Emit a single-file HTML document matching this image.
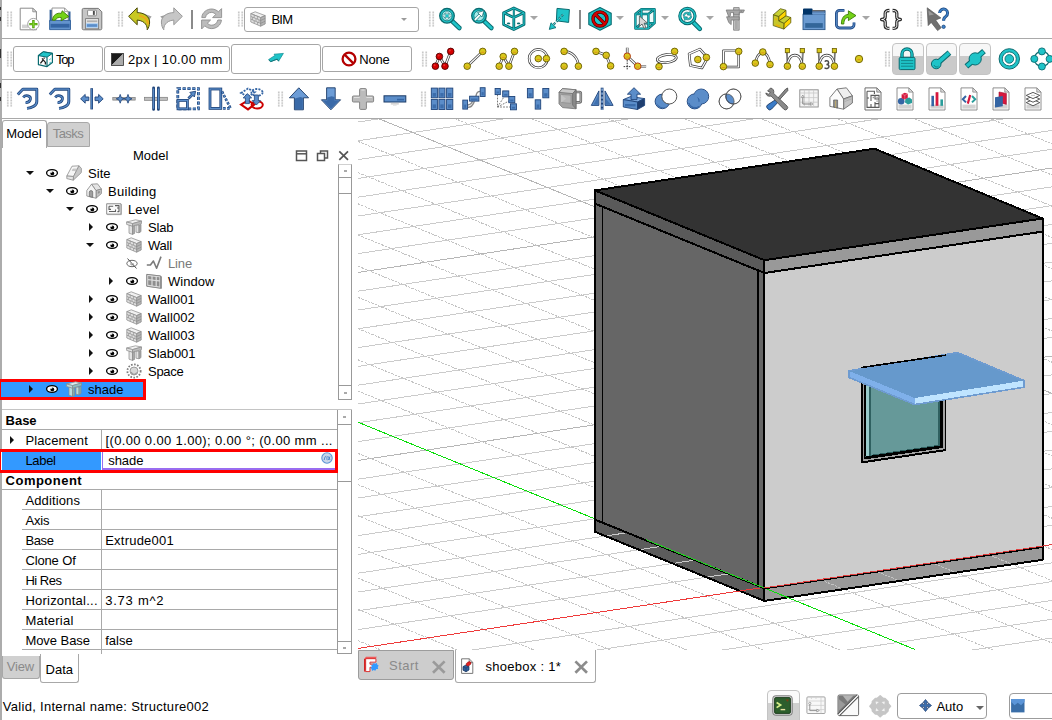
<!DOCTYPE html>
<html><head><meta charset="utf-8"><title>FreeCAD</title><style>
*{box-sizing:border-box;margin:0;padding:0}
html,body{width:1052px;height:720px;overflow:hidden;background:#fff}
body{position:relative;font-family:"Liberation Sans",sans-serif;font-size:13px;color:#000}
.abs{position:absolute}
.hl{position:absolute;height:1px;background:#a9a9a9}
.vl{position:absolute;width:1px;background:#a9a9a9}
.t{position:absolute;white-space:nowrap;line-height:16px;height:16px;font-size:13px}
.ic{position:absolute;width:24px;height:24px;overflow:visible}
.btn{position:absolute;background:#fff;border:1px solid #a6a6a6;border-radius:3px}
.grip{position:absolute;width:7px;height:16px;background-image:radial-gradient(circle,#c2c2c2 0.85px,transparent 1.1px);background-size:3.5px 2.7px}
.dd{position:absolute;width:0;height:0;border-left:4px solid transparent;border-right:4px solid transparent;border-top:4px solid #777}
.tri-r{position:absolute;width:0;height:0;border-top:4.5px solid transparent;border-bottom:4.5px solid transparent;border-left:4.5px solid #111}
.tri-d{position:absolute;width:0;height:0;border-left:4.8px solid transparent;border-right:4.8px solid transparent;border-top:4.7px solid #111}
</style></head><body>
<div class="vl" style="left:0px;top:0px;width:1.8px;height:720px;background:#acacac"></div>
<div class="hl" style="left:0;top:38px;width:1052px"></div>
<div class="hl" style="left:0;top:79px;width:1052px"></div>
<div class="hl" style="left:0;top:118px;width:1052px"></div>
<div class="abs" style="left:0;top:7px;width:1px;height:3px;background:#333"></div>
<div class="abs" style="left:0;top:17px;width:1px;height:4px;background:#333"></div>
<div class="abs" style="left:0;top:49px;width:1px;height:9px;background:#333"></div>
<div class="abs" style="left:0;top:83px;width:1px;height:5px;background:#333"></div>
<div class="abs" style="left:0;top:97px;width:1px;height:4px;background:#333"></div>
<div class="grip" style="left:6px;top:11px"></div>
<svg class="ic" style="left:16.0px;top:7.0px;width:24px;height:24px" viewBox="0 0 24 24"><path d="M4.2 1.2 h12.6 l3.6 3.6 v18 h-16.2z" fill="#fff" stroke="#8a8a8a" stroke-width="1"/><path d="M16.8 1.2 v3.6 h3.6z" fill="#e4e4e4" stroke="#8a8a8a" stroke-width="0.9" stroke-linejoin="round"/><rect x="6" y="17.6" width="6" height="3.6" fill="#d2d2d2"/><circle cx="17.4" cy="17.1" r="5.7" fill="#fff" stroke="#9a9a9a" stroke-width="0.9"/><path d="M17.4 13 v8.2 M13.3 17.1 h8.2" stroke="#4e9a06" stroke-width="2.4"/><path d="M17.4 13.8 v6.6 M14.1 17.1 h6.6" stroke="#8ae234" stroke-width="0.8"/></svg>
<svg class="ic" style="left:48.0px;top:7.0px;width:24px;height:24px" viewBox="0 0 24 24"><path d="M1.6 2.8 h2.6 v12 h-2.6z M20 4.6 h2.5 v10 h-2.5z" fill="#2f5f9a"/><path d="M4 1 h12.6 l3.6 3.6 v11 h-16.2z" fill="#fff" stroke="#8a8a8a" stroke-width="0.9"/><path d="M16.6 1 v3.6 h3.6" fill="none" stroke="#8a8a8a" stroke-width="0.8"/><path d="M1.6 13.4 h20.9 v9.2 h-20.9z" fill="#6393cd" stroke="#2f5f9a" stroke-width="0.9"/><rect x="2.6" y="16.8" width="18.9" height="3.8" fill="#3465a4"/><path d="M4.4 13.2 C4.8 8 9 5.4 13.4 6.4 L14.2 3.8 L20.8 9.6 L13 13.8 L13.4 10.6 C10.6 10 8.2 11 7.4 13.2z" fill="#73d216" stroke="#3f7f06" stroke-width="0.9" stroke-linejoin="round"/></svg>
<svg class="ic" style="left:80.0px;top:7.0px;width:24px;height:24px" viewBox="0 0 24 24"><path d="M3.6 1.4 h14.8 l3.4 3.4 v16.6 a1.4 1.4 0 0 1 -1.4 1.4 h-16.8 a1.4 1.4 0 0 1 -1.4 -1.4 v-18.6 a1.4 1.4 0 0 1 1.4 -1.4z" fill="#c6c6c6" stroke="#767676" stroke-width="1"/><rect x="7.6" y="3.2" width="8.8" height="5.6" rx="0.8" fill="#fff" stroke="#767676" stroke-width="0.8"/><rect x="12.9" y="4" width="1.9" height="3.9" fill="#4a4a4a"/><rect x="5.6" y="11.6" width="13" height="10.2" fill="#e2e2e2" stroke="#767676" stroke-width="0.8"/><rect x="7" y="13.4" width="10.2" height="1.7" fill="#b0b0b0"/><rect x="6.5" y="16.8" width="11.2" height="3.4" fill="#5b8dc9" stroke="#a8d4ff" stroke-width="0.7"/></svg>
<div class="grip" style="left:117px;top:11px"></div>
<svg class="ic" style="left:128.0px;top:7.0px;width:24px;height:24px" viewBox="0 0 24 24"><polygon points="15.6,6.6 23.6,9.6 19.4,15.4" fill="#a0a0a0"/><path d="M0.6 9.3 L9.2 0.8 L9.2 5.6 C16 5.6 21.6 9.5 21.6 15 C21.6 18.5 20.4 21.4 19.2 22.8 C19.4 19.4 17.8 14 9.2 13 L9.2 17.8 Z" fill="#c8c822" stroke="#4a4a08" stroke-width="1" stroke-linejoin="round"/><path d="M11 8.6 C16 9.4 19.6 12 20.2 17.4" fill="none" stroke="#f0a818" stroke-width="1.8"/></svg>
<svg class="ic" style="left:159.0px;top:7.0px;width:24px;height:24px" viewBox="0 0 24 24"><g transform="translate(24,0) scale(-1,1)"><polygon points="14.6,7 22.8,9.4 17.4,14.6" fill="#9a9a9a"/><path d="M0.6 9.3 L9.2 0.8 L9.2 5.6 C16 5.6 21.6 9.5 21.6 15 C21.6 18.5 20.4 21.4 19.2 22.8 C19.4 19.4 17.8 14 9.2 13 L9.2 17.8 Z" fill="#c6c6c6" stroke="#9a9a9a" stroke-width="1" stroke-linejoin="round"/></g></svg>
<div class="vl" style="left:191.2px;top:10px;height:18.5px;width:1.5px;background:#8a8a8a"></div>
<svg class="ic" style="left:199.0px;top:7.0px;width:24px;height:24px" viewBox="0 0 24 24"><path d="M2.8 10.6 C3 5.4 8 1.8 13 2 C15.8 2.2 17.8 3.2 19.4 4.8 L22.6 1.6 L22.6 10.6 L13.6 10.6 L16.8 7.4 C15.6 6.2 14 5.4 12.4 5.4 C9.6 5.4 7 7.4 6.4 10.6 Z" fill="#bcbcbc" stroke="#8e8e8e" stroke-width="0.9" stroke-linejoin="round"/><path d="M2.8 10.6 C3 5.4 8 1.8 13 2 C15.8 2.2 17.8 3.2 19.4 4.8 L22.6 1.6 L22.6 10.6 L13.6 10.6 L16.8 7.4 C15.6 6.2 14 5.4 12.4 5.4 C9.6 5.4 7 7.4 6.4 10.6 Z" transform="rotate(180 12.6 11.8)" fill="#bcbcbc" stroke="#8e8e8e" stroke-width="0.9" stroke-linejoin="round"/></svg>
<div class="grip" style="left:237px;top:11px"></div>
<div class="btn" style="left:244px;top:7px;width:175px;height:25px"></div>
<svg class="ic" style="left:249.5px;top:10.5px;width:16px;height:16px" viewBox="0 0 16 16"><g stroke="#858585" stroke-width="0.7" stroke-linejoin="round"><polygon points="0.8,2.6 5.2,0.8 15.2,4.6 10.6,6.6" fill="#f0f0f0"/><polygon points="10.6,6.6 15.2,4.6 15.2,13 10.6,15.2" fill="#b4b4b4"/><polygon points="0.8,2.6 10.6,6.6 10.6,15.2 0.8,11" fill="#e0e0e0"/><path d="M0.8 5.4 L10.6 9.5 M0.8 8.2 L10.6 12.4 M4.2 4 v2.8 M7.6 5.4 v2.8 M2.6 6.2 v2.8 M6 7.6 v2.8 M9 8.8 v2.8 M4.2 9.6 v2.8 M7.6 11 v2.8 M10.6 9.5 L15.2 7.4 M10.6 12.4 L15.2 10.2" fill="none" stroke-width="0.6"/></g></svg>
<div class="t" style="left:271.5px;top:11.5px;font-size:13px;color:#000;letter-spacing:-0.806px;">BIM</div>
<div class="abs" style="left:401.2px;top:17.6px;width:0;height:0;border-left:3.6px solid transparent;border-right:3.6px solid transparent;border-top:3.6px solid #9a9a9a"></div>
<div class="grip" style="left:428px;top:11px"></div>
<svg class="ic" style="left:437.0px;top:7.0px;width:24px;height:24px" viewBox="0 0 24 24"><path d="M15 14 L22.4 21" stroke="#0a6b70" stroke-width="4.6" stroke-linecap="round"/><path d="M15 14 L22.4 21" stroke="#1fc4c8" stroke-width="2.6" stroke-linecap="round"/><circle cx="10" cy="8.8" r="7.3" fill="#1fc4c8" stroke="#0a6b70" stroke-width="1.3"/><circle cx="10" cy="8.8" r="5.1" fill="#a6ecec" stroke="#0a6b70" stroke-width="0.8"/><path d="M10 4.4 L12.2 6.8 H7.8z M10 13.2 L12.2 10.8 H7.8z M5.6 8.8 L8 6.6 V11z M14.4 8.8 L12 6.6 V11z" fill="#fff" stroke="#0a6b70" stroke-width="0.5"/><rect x="8.7" y="7.5" width="2.6" height="2.6" fill="#1fc4c8"/></svg>
<svg class="ic" style="left:469.0px;top:7.0px;width:24px;height:24px" viewBox="0 0 24 24"><path d="M15 14 L22.4 21" stroke="#0a6b70" stroke-width="4.6" stroke-linecap="round"/><path d="M15 14 L22.4 21" stroke="#1fc4c8" stroke-width="2.6" stroke-linecap="round"/><circle cx="10" cy="8.8" r="7.3" fill="#1fc4c8" stroke="#0a6b70" stroke-width="1.3"/><circle cx="10" cy="8.8" r="5.1" fill="#a6ecec" stroke="#0a6b70" stroke-width="0.8"/><path d="M5.6 13.2 L11 7.8" stroke="#0a6b70" stroke-width="3"/><path d="M5.8 13 L11.4 7.4" stroke="#fff" stroke-width="1.8"/><polygon points="15,3.6 8.6,5.6 13,10" fill="#fff" stroke="#0a6b70" stroke-width="0.7"/></svg>
<svg class="ic" style="left:501.0px;top:7.0px;width:24px;height:24px" viewBox="0 0 24 24"><path d="M12.8 1 L23 5.8 V17.4 L12.8 22.6 L2.6 17.4 V5.8 Z M2.6 5.8 L12.8 10.6 L23 5.8 M12.8 10.6 V22.6" fill="#fff" stroke="#0a6b70" stroke-width="2.8" stroke-linejoin="round"/><path d="M12.8 1 V10.6" fill="none" stroke="#0a6b70" stroke-width="2"/><path d="M12.8 1 L23 5.8 V17.4 L12.8 22.6 L2.6 17.4 V5.8 Z M2.6 5.8 L12.8 10.6 L23 5.8 M12.8 10.6 V22.6" fill="none" stroke="#1fc4c8" stroke-width="1" stroke-linejoin="round"/><path d="M12.8 1 V10.6" fill="none" stroke="#1fc4c8" stroke-width="0.7"/><ellipse cx="7.6" cy="16.4" rx="1.7" ry="0.9" fill="#0a6b70"/><ellipse cx="17.6" cy="16.4" rx="1.7" ry="0.9" fill="#0a6b70"/></svg>
<div class="dd" style="left:530.0px;top:16.400000000000002px;border-left-width:4.4px;border-right-width:4.4px;border-top-width:4.4px;border-top-color:#a6a6a6"></div>
<svg class="ic" style="left:548.0px;top:7.0px;width:24px;height:24px" viewBox="0 0 24 24"><polygon points="9,1.4 21.4,2.6 20.6,15.4 8.4,13.8" fill="#1fc4c8" stroke="#0a6b70" stroke-width="1" stroke-linejoin="round"/><path d="M15 7.4 L5 18.4" stroke="#0a6b70" stroke-width="2.2" stroke-dasharray="2.4 1.4"/><path d="M15 7.4 L5 18.4" stroke="#a6ecec" stroke-width="0.8" stroke-dasharray="2.4 1.4"/><polygon points="1.3,22.4 3,15.8 8,20.6" fill="#1fc4c8" stroke="#0a6b70" stroke-width="0.9" stroke-linejoin="round"/></svg>
<div class="vl" style="left:579.2px;top:10px;height:18.5px;width:1.5px;background:#8a8a8a"></div>
<svg class="ic" style="left:588.0px;top:7.0px;width:24px;height:24px" viewBox="0 0 24 24"><polygon points="12,0.6 23.2,6.2 23.2,17.6 12,23.2 0.8,17.6 0.8,6.2" fill="#1fc4c8" stroke="#0a6b70" stroke-width="1.1" stroke-linejoin="round"/><path d="M0.8 6.2 L12 11.6 L23.2 6.2" fill="none" stroke="#0a6b70" stroke-width="0.5" opacity="0.5"/><circle cx="12" cy="12" r="7" fill="none" stroke="#4a0000" stroke-width="3.4"/><path d="M7 7 L17 17" stroke="#4a0000" stroke-width="3.4"/><circle cx="12" cy="12" r="7" fill="none" stroke="#d40000" stroke-width="2"/><path d="M7 7 L17 17" stroke="#d40000" stroke-width="2"/></svg>
<div class="dd" style="left:616.1px;top:16.400000000000002px;border-left-width:4.4px;border-right-width:4.4px;border-top-width:4.4px;border-top-color:#a6a6a6"></div>
<svg class="ic" style="left:633.0px;top:7.0px;width:24px;height:24px" viewBox="0 0 24 24"><polygon points="2.4,7 8.4,2.2 21.6,2.2 21.6,16.2 15.4,21.6 2.4,21.6" fill="#eefcfc"/><path d="M2.4 7 H15.4 V21.6 H2.4 Z M2.4 7 L8.4 2.2 H21.6 L15.4 7 M21.6 2.2 V16.2 L15.4 21.6 M8.4 2.2 V16.2 L2.4 21.6 M8.4 16.2 H21.6" fill="none" stroke="#0a6b70" stroke-width="2.4" stroke-linejoin="round"/><path d="M2.4 7 H15.4 V21.6 H2.4 Z M2.4 7 L8.4 2.2 H21.6 L15.4 7 M21.6 2.2 V16.2 L15.4 21.6 M8.4 2.2 V16.2 L2.4 21.6 M8.4 16.2 H21.6" fill="none" stroke="#1fc4c8" stroke-width="0.9" stroke-linejoin="round"/><polygon points="6.4,9 6.4,19.4 9,17 11,21.4 13,20.4 11,16.2 14.4,16" fill="#d8d8d8" stroke="#555" stroke-width="0.8" stroke-linejoin="round"/></svg>
<div class="dd" style="left:661.3000000000001px;top:16.400000000000002px;border-left-width:4.4px;border-right-width:4.4px;border-top-width:4.4px;border-top-color:#a6a6a6"></div>
<svg class="ic" style="left:677.0px;top:7.0px;width:24px;height:24px" viewBox="0 0 24 24"><path d="M16 15 L22.8 21.8" stroke="#0a6b70" stroke-width="4.6" stroke-linecap="round"/><path d="M16 15 L22.8 21.8" stroke="#1fc4c8" stroke-width="2.6" stroke-linecap="round"/><circle cx="10.4" cy="9" r="7.6" fill="#fff" stroke="#0a6b70" stroke-width="3.2"/><circle cx="10.4" cy="9" r="7.6" fill="none" stroke="#1fc4c8" stroke-width="1.4"/><path d="M6 8.4 C6.4 5.6 9.6 4.4 12 5.6 L13 4.4 L14.4 8.4 L10.2 8 L11.2 6.8 C9.6 6.2 7.8 7 7.6 8.6z" fill="#1fc4c8" stroke="#0a6b70" stroke-width="0.6"/><path d="M14.8 9.6 C14.4 12.4 11.2 13.6 8.8 12.4 L7.8 13.6 L6.4 9.6 L10.6 10 L9.6 11.2 C11.2 11.8 13 11 13.2 9.4z" fill="#1fc4c8" stroke="#0a6b70" stroke-width="0.6"/></svg>
<div class="dd" style="left:705.9px;top:16.400000000000002px;border-left-width:4.4px;border-right-width:4.4px;border-top-width:4.4px;border-top-color:#a6a6a6"></div>
<svg class="ic" style="left:723.0px;top:7.0px;width:24px;height:24px" viewBox="0 0 24 24"><g stroke="#7a7a7a" stroke-width="0.8" stroke-linejoin="round"><path d="M10.6 0.6 h5.6 v22.6 h-5.6z" fill="#c4c4c4"/><path d="M3.2 3 h18.2 l-1.2 2.6 h-4 v2.2 h-5.6 v-2.2 h-3.2 v3 l-1.6 1.4 z" fill="#a8a8a8"/><path d="M3.6 9.8 h12.6 v3.2 h-8 v4.6 l-2.4 -2 z" fill="#a8a8a8"/><path d="M12 15 h2.8 M12 17 h2.8 M12 19 h2.8 M12 21 h2.8 M17 3.6 v1.4 M18.6 3.6 v1.4" stroke-width="0.7" fill="none"/></g></svg>
<div class="grip" style="left:760px;top:11px"></div>
<svg class="ic" style="left:770.0px;top:7.0px;width:24px;height:24px" viewBox="0 0 24 24"><g stroke="#5a5a0a" stroke-width="0.8" stroke-linejoin="round"><polygon points="3.4,7.7 8.9,9.5 8.9,13.9 14.2,16.4 13.9,22.1 3.2,18.6" fill="#c6c62a"/><polygon points="3.4,7.7 10.4,1.7 16,3.3 8.9,9.5" fill="#c8d030"/><polygon points="8.9,9.5 16,3.3 16,8.9 8.9,13.9" fill="#ffd400"/><polygon points="8.9,13.9 16,8.9 20.8,10.5 14.2,16.4" fill="#c8d030"/><polygon points="14.2,16.4 20.8,10.5 20.8,15.8 13.9,22.1" fill="#ffd400"/><circle cx="6.2" cy="12.2" r="1" fill="#f0b000" stroke="none"/><path d="M6 18 l4 1.4" stroke="#f0b000" stroke-width="1.4"/></g></svg>
<svg class="ic" style="left:802.0px;top:7.0px;width:24px;height:24px" viewBox="0 0 24 24"><rect x="1" y="7.2" width="22" height="15.4" fill="#6a9ad0" stroke="#2c5a8c" stroke-width="0.9"/><path d="M1 7.6 V2.4 a1 1 0 0 1 1 -1 h7.6 a1 1 0 0 1 1 1 V7.6z" fill="#003366"/><rect x="10.4" y="3.3" width="12.8" height="1.2" fill="#2a2a2a"/><rect x="10.4" y="4.4" width="12.8" height="1.4" fill="#3465a4"/><path d="M23 3.4 v4" stroke="#2c5a8c" stroke-width="0.9"/><rect x="10.4" y="5.8" width="12.2" height="1.6" fill="#6a9ad0"/><rect x="3.2" y="16.1" width="17.6" height="4.7" fill="#336699"/></svg>
<svg class="ic" style="left:833.8px;top:7.0px;width:24px;height:24px" viewBox="0 0 24 24"><path d="M10.4 3.4 H5.6 a3.2 3.2 0 0 0 -3.2 3.2 V17.8 a3.2 3.2 0 0 0 3.2 3.2 H16.8 a3.2 3.2 0 0 0 3.2 -3.2 V15.4" fill="none" stroke="#204a87" stroke-width="2.8"/><path d="M10.4 3.4 H5.6 a3.2 3.2 0 0 0 -3.2 3.2 V17.8 a3.2 3.2 0 0 0 3.2 3.2 H16.8 a3.2 3.2 0 0 0 3.2 -3.2 V15.4" fill="none" stroke="#5b8dc9" stroke-width="1"/><path d="M7.4 17 C7.4 11 10 7.6 14.4 7.4 V3.8 L22 8.6 L14.4 13.6 V10.4 C11.6 10.6 10 12.6 9.8 17z" fill="#73d216" stroke="#3a7a06" stroke-width="0.9" stroke-linejoin="round"/></svg>
<div class="dd" style="left:862.2px;top:16.400000000000002px;border-left-width:4.4px;border-right-width:4.4px;border-top-width:4.4px;border-top-color:#a6a6a6"></div>
<svg class="ic" style="left:879.2px;top:7.0px;width:24px;height:24px" viewBox="0 0 24 24"><path d="M10.4 3.5 C7.2 3.5 6.2 4.4 6.2 6.6 V9.8 C6.2 11.6 5 12.5 2.6 12.5 C5 12.5 6.2 13.4 6.2 15.2 V18.4 C6.2 20.6 7.2 21.4 10.4 21.4" fill="none" stroke="#2a2a2a" stroke-width="3.3" stroke-linejoin="round"/><path d="M10.4 3.5 C7.2 3.5 6.2 4.4 6.2 6.6 V9.8 C6.2 11.6 5 12.5 2.6 12.5 C5 12.5 6.2 13.4 6.2 15.2 V18.4 C6.2 20.6 7.2 21.4 10.4 21.4" fill="none" stroke="#fff" stroke-width="1"/><g transform="translate(24,0) scale(-1,1)"><path d="M10.4 3.5 C7.2 3.5 6.2 4.4 6.2 6.6 V9.8 C6.2 11.6 5 12.5 2.6 12.5 C5 12.5 6.2 13.4 6.2 15.2 V18.4 C6.2 20.6 7.2 21.4 10.4 21.4" fill="none" stroke="#2a2a2a" stroke-width="3.3" stroke-linejoin="round"/><path d="M10.4 3.5 C7.2 3.5 6.2 4.4 6.2 6.6 V9.8 C6.2 11.6 5 12.5 2.6 12.5 C5 12.5 6.2 13.4 6.2 15.2 V18.4 C6.2 20.6 7.2 21.4 10.4 21.4" fill="none" stroke="#fff" stroke-width="1"/></g></svg>
<div class="grip" style="left:915.5px;top:11px"></div>
<svg class="ic" style="left:926.0px;top:7.0px;width:24px;height:24px" viewBox="0 0 24 24"><polygon points="1.2,0.8 2.2,18.6 5.2,15.4 11.6,23.6 15.2,20.8 9.6,13 14.9,10.9" fill="#707070" stroke="#585858" stroke-width="0.7" stroke-linejoin="round"/><polygon points="2.4,3.4 3,8.6 8,7.6" fill="#9a9a9a"/><path d="M13.6 6 a4 4 0 1 1 6.2 3.4 c-1.6 1 -2.2 2 -2.2 4.4" fill="none" stroke="#1f4a80" stroke-width="3"/><path d="M13.6 6 a4 4 0 1 1 6.2 3.4 c-1.6 1 -2.2 2 -2.2 4.4" fill="none" stroke="#3f82c8" stroke-width="1.5"/><circle cx="17.6" cy="19.8" r="1.7" fill="#3f82c8" stroke="#1f4a80" stroke-width="0.8"/></svg>
<div class="grip" style="left:6px;top:51px"></div>
<div class="btn" style="left:13px;top:46px;width:89.5px;height:25.5px"></div>
<div class="btn" style="left:104.3px;top:46px;width:125.3px;height:25.5px"></div>
<div class="btn" style="left:231px;top:44px;width:89.80000000000001px;height:29.5px"></div>
<div class="btn" style="left:322.3px;top:46px;width:89.69999999999999px;height:25.5px"></div>
<svg class="ic" style="left:37.0px;top:51.0px;width:16px;height:16px" viewBox="0 0 16 16"><polygon points="1.4,4.6 6.4,0.8 15.4,2.4 15.4,11.6 10,15.6 1.4,13.6" fill="#fff" stroke="#0a6b70" stroke-width="1.2" stroke-linejoin="round"/><polygon points="1.4,4.6 6.4,0.8 15.4,2.4 10,6.2" fill="#1fc4c8" stroke="#0a6b70" stroke-width="1" stroke-linejoin="round"/><path d="M10 6.2 V15.6" stroke="#0a6b70" stroke-width="1.2"/><path d="M3.4 12.4 L6.2 9 M5 7.4 L8.4 11.4 L8.4 13.4 M6.6 7.6 L7.6 6.8" stroke="#222" stroke-width="1.3" fill="none"/><path d="M12 9 L14 7.6 M12 12.4 L14 11" stroke="#1fc4c8" stroke-width="0.8"/></svg>
<div class="t" style="left:56px;top:51.5px;font-size:13px;color:#000;letter-spacing:-1.180px;">Top</div>
<svg class="ic" style="left:110.7px;top:52.5px;width:13px;height:13px" viewBox="0 0 13 13"><polygon points="0.5,0.5 12.5,0.5 0.5,12.5" fill="#1a1a1a"/><polygon points="12.5,0.5 12.5,12.5 0.5,12.5" fill="#ababab"/><rect x="0.5" y="0.5" width="12" height="12" fill="none" stroke="#333" stroke-width="0.8"/></svg>
<div class="t" style="left:128px;top:51.5px;font-size:13px;color:#000;letter-spacing:0.380px;">2px | 10.00 mm</div>
<svg class="ic" style="left:268.0px;top:50.2px;width:16px;height:16px" viewBox="0 0 16 16"><polygon points="0.6,9.6 7,5.4 6,4.2 15.4,3.4 10.6,11.2 9.2,9 2.8,11.6" fill="#1fc4c8" stroke="#0d8a90" stroke-width="0.7" stroke-linejoin="round"/><path d="M0.8 10.2 L2.8 11.6 L9.2 9.2 L10.6 11.2" fill="none" stroke="#0a6b70" stroke-width="0.9"/></svg>
<svg class="ic" style="left:341.0px;top:51.0px;width:16px;height:16px" viewBox="0 0 16 16"><circle cx="8" cy="8" r="6.4" fill="#fff" stroke="#b40000" stroke-width="2.3"/><path d="M3.6 3.6 L12.4 12.4" stroke="#b40000" stroke-width="2.3"/></svg>
<div class="t" style="left:359.2px;top:51.5px;font-size:13px;color:#000;letter-spacing:-0.159px;">None</div>
<div class="grip" style="left:420.5px;top:51px"></div>
<svg class="ic" style="left:431.0px;top:47.0px;width:24px;height:24px" viewBox="0 0 24 24"><path d="M4.4 19.2 L8.4 9.5 L14 19.2 L19.7 4.4" fill="none" stroke="#3a3a3a" stroke-width="2.6" stroke-linejoin="round" /><path d="M4.4 19.2 L8.4 9.5 L14 19.2 L19.7 4.4" fill="none" stroke="#fff" stroke-width="1.2" stroke-linejoin="round" /><circle cx="4.4" cy="19.2" r="3.3" fill="#d40000" stroke="#500000" stroke-width="0.9"/><circle cx="3.6000000000000005" cy="18.2" r="1" fill="#f04040" opacity="0.7"/><circle cx="8.4" cy="9.5" r="3.3" fill="#d40000" stroke="#500000" stroke-width="0.9"/><circle cx="7.6000000000000005" cy="8.5" r="1" fill="#f04040" opacity="0.7"/><circle cx="14" cy="19.2" r="3.3" fill="#d40000" stroke="#500000" stroke-width="0.9"/><circle cx="13.2" cy="18.2" r="1" fill="#f04040" opacity="0.7"/><circle cx="19.7" cy="4.4" r="3.3" fill="#d40000" stroke="#500000" stroke-width="0.9"/><circle cx="18.9" cy="3.4000000000000004" r="1" fill="#f04040" opacity="0.7"/></svg>
<svg class="ic" style="left:463.0px;top:47.0px;width:24px;height:24px" viewBox="0 0 24 24"><path d="M4.2 19.2 L19.7 4.4" fill="none" stroke="#3a3a3a" stroke-width="2.6" stroke-linejoin="round" /><path d="M4.2 19.2 L19.7 4.4" fill="none" stroke="#fff" stroke-width="1.2" stroke-linejoin="round" /><circle cx="4.2" cy="19.2" r="3.3" fill="#d9c91c" stroke="#6a5c00" stroke-width="0.9"/><rect x="2.7" y="19.599999999999998" width="3" height="0.9" fill="#e0861a" opacity="0.85"/><circle cx="19.7" cy="4.4" r="3.3" fill="#d9c91c" stroke="#6a5c00" stroke-width="0.9"/><rect x="18.2" y="4.800000000000001" width="3" height="0.9" fill="#e0861a" opacity="0.85"/></svg>
<svg class="ic" style="left:495.0px;top:47.0px;width:24px;height:24px" viewBox="0 0 24 24"><path d="M4.2 19.2 L8.2 9.5 L13.9 19.2 L19.5 4.4" fill="none" stroke="#3a3a3a" stroke-width="2.6" stroke-linejoin="round" /><path d="M4.2 19.2 L8.2 9.5 L13.9 19.2 L19.5 4.4" fill="none" stroke="#fff" stroke-width="1.2" stroke-linejoin="round" /><circle cx="4.2" cy="19.2" r="3.3" fill="#d9c91c" stroke="#6a5c00" stroke-width="0.9"/><rect x="2.7" y="19.599999999999998" width="3" height="0.9" fill="#e0861a" opacity="0.85"/><circle cx="8.2" cy="9.5" r="3.3" fill="#d9c91c" stroke="#6a5c00" stroke-width="0.9"/><rect x="6.699999999999999" y="9.9" width="3" height="0.9" fill="#e0861a" opacity="0.85"/><circle cx="13.9" cy="19.2" r="3.3" fill="#d9c91c" stroke="#6a5c00" stroke-width="0.9"/><rect x="12.4" y="19.599999999999998" width="3" height="0.9" fill="#e0861a" opacity="0.85"/><circle cx="19.5" cy="4.4" r="3.3" fill="#d9c91c" stroke="#6a5c00" stroke-width="0.9"/><rect x="18.0" y="4.800000000000001" width="3" height="0.9" fill="#e0861a" opacity="0.85"/></svg>
<svg class="ic" style="left:526.0px;top:47.0px;width:24px;height:24px" viewBox="0 0 24 24"><circle cx="12.3" cy="11.6" r="9.2" fill="none" stroke="#3a3a3a" stroke-width="2.6"/><circle cx="12.3" cy="11.6" r="9.2" fill="none" stroke="#fff" stroke-width="1.2"/><circle cx="12.3" cy="11.6" r="3.3" fill="#d9c91c" stroke="#6a5c00" stroke-width="0.9"/><rect x="10.8" y="12.0" width="3" height="0.9" fill="#e0861a" opacity="0.85"/><circle cx="20.4" cy="11.6" r="3.3" fill="#d9c91c" stroke="#6a5c00" stroke-width="0.9"/><rect x="18.9" y="12.0" width="3" height="0.9" fill="#e0861a" opacity="0.85"/></svg>
<svg class="ic" style="left:558.0px;top:47.0px;width:24px;height:24px" viewBox="0 0 24 24"><path d="M6.1 4.4 A14.5 14.5 0 0 1 20.4 19.2" fill="none" stroke="#3a3a3a" stroke-width="2.6" stroke-linejoin="round" /><path d="M6.1 4.4 A14.5 14.5 0 0 1 20.4 19.2" fill="none" stroke="#fff" stroke-width="1.2" stroke-linejoin="round" /><circle cx="6.1" cy="4.4" r="3.3" fill="#d9c91c" stroke="#6a5c00" stroke-width="0.9"/><rect x="4.6" y="4.800000000000001" width="3" height="0.9" fill="#e0861a" opacity="0.85"/><circle cx="6.1" cy="19.2" r="3.3" fill="#d9c91c" stroke="#6a5c00" stroke-width="0.9"/><rect x="4.6" y="19.599999999999998" width="3" height="0.9" fill="#e0861a" opacity="0.85"/><circle cx="20.4" cy="19.2" r="3.3" fill="#d9c91c" stroke="#6a5c00" stroke-width="0.9"/><rect x="18.9" y="19.599999999999998" width="3" height="0.9" fill="#e0861a" opacity="0.85"/></svg>
<svg class="ic" style="left:591.0px;top:47.0px;width:24px;height:24px" viewBox="0 0 24 24"><path d="M5 4.4 L15.2 8.3 L19.6 18.9" fill="none" stroke="#3a3a3a" stroke-width="2.6" stroke-linejoin="round" /><path d="M5 4.4 L15.2 8.3 L19.6 18.9" fill="none" stroke="#fff" stroke-width="1.2" stroke-linejoin="round" /><circle cx="5" cy="4.4" r="3.3" fill="#d9c91c" stroke="#6a5c00" stroke-width="0.9"/><rect x="3.5" y="4.800000000000001" width="3" height="0.9" fill="#e0861a" opacity="0.85"/><circle cx="15.2" cy="8.3" r="3.3" fill="#d9c91c" stroke="#6a5c00" stroke-width="0.9"/><rect x="13.7" y="8.700000000000001" width="3" height="0.9" fill="#e0861a" opacity="0.85"/><circle cx="19.6" cy="18.9" r="3.3" fill="#d9c91c" stroke="#6a5c00" stroke-width="0.9"/><rect x="18.1" y="19.299999999999997" width="3" height="0.9" fill="#e0861a" opacity="0.85"/></svg>
<svg class="ic" style="left:623.0px;top:47.0px;width:24px;height:24px" viewBox="0 0 24 24"><path d="M4.2 0.7 V9.2 L14.7 19.2 H23.1" fill="none" stroke="#3a3a3a" stroke-width="2.6" stroke-linejoin="round" /><path d="M4.2 0.7 V9.2 L14.7 19.2 H23.1" fill="none" stroke="#fff" stroke-width="1.2" stroke-linejoin="round" /><path d="M4.2 13 V23 M0.6 19.6 H7.4" stroke="#222" stroke-width="0.9" stroke-dasharray="1.6 1"/><circle cx="4.2" cy="9.2" r="3.3" fill="#d9c91c" stroke="#b03010" stroke-width="0.9"/><rect x="2.7" y="9.6" width="3" height="0.9" fill="#e0861a" opacity="0.85"/><circle cx="14.7" cy="19.2" r="3.3" fill="#d9c91c" stroke="#b03010" stroke-width="0.9"/><rect x="13.2" y="19.599999999999998" width="3" height="0.9" fill="#e0861a" opacity="0.85"/></svg>
<svg class="ic" style="left:655.0px;top:47.0px;width:24px;height:24px" viewBox="0 0 24 24"><ellipse cx="11.8" cy="11.6" rx="9.6" ry="4" transform="rotate(-7 11.8 11.6)" fill="none" stroke="#3a3a3a" stroke-width="2.6"/><ellipse cx="11.8" cy="11.6" rx="9.6" ry="4" transform="rotate(-7 11.8 11.6)" fill="none" stroke="#fff" stroke-width="1.2"/><circle cx="19.6" cy="4.4" r="3.3" fill="#d9c91c" stroke="#6a5c00" stroke-width="0.9"/><rect x="18.1" y="4.800000000000001" width="3" height="0.9" fill="#e0861a" opacity="0.85"/><circle cx="4" cy="19.6" r="3.3" fill="#d9c91c" stroke="#6a5c00" stroke-width="0.9"/><rect x="2.5" y="20.0" width="3" height="0.9" fill="#e0861a" opacity="0.85"/></svg>
<svg class="ic" style="left:687.0px;top:47.0px;width:24px;height:24px" viewBox="0 0 24 24"><polygon points="12.9,2.1 20.7,10.9 14.9,21.0 3.4,18.6 2.1,6.9" fill="none" stroke="#3a3a3a" stroke-width="2.6" stroke-linejoin="round"/><polygon points="12.9,2.1 20.7,10.9 14.9,21.0 3.4,18.6 2.1,6.9" fill="none" stroke="#fff" stroke-width="1.2" stroke-linejoin="round"/><circle cx="10.8" cy="12.5" r="3.3" fill="#d9c91c" stroke="#6a5c00" stroke-width="0.9"/><rect x="9.3" y="12.9" width="3" height="0.9" fill="#e0861a" opacity="0.85"/><circle cx="19.4" cy="10.4" r="3.3" fill="#d9c91c" stroke="#6a5c00" stroke-width="0.9"/><rect x="17.9" y="10.8" width="3" height="0.9" fill="#e0861a" opacity="0.85"/></svg>
<svg class="ic" style="left:719.0px;top:47.0px;width:24px;height:24px" viewBox="0 0 24 24"><path d="M4.4 3.8 H19.7 V20 H4.4 Z" fill="none" stroke="#3a3a3a" stroke-width="2.6" stroke-linejoin="round" /><path d="M4.4 3.8 H19.7 V20 H4.4 Z" fill="none" stroke="#fff" stroke-width="1.2" stroke-linejoin="round" /><circle cx="19.7" cy="4.4" r="3.3" fill="#d9c91c" stroke="#6a5c00" stroke-width="0.9"/><rect x="18.2" y="4.800000000000001" width="3" height="0.9" fill="#e0861a" opacity="0.85"/><circle cx="4.4" cy="19.6" r="3.3" fill="#d9c91c" stroke="#6a5c00" stroke-width="0.9"/><rect x="2.9000000000000004" y="20.0" width="3" height="0.9" fill="#e0861a" opacity="0.85"/></svg>
<svg class="ic" style="left:751.0px;top:47.0px;width:24px;height:24px" viewBox="0 0 24 24"><path d="M4.3 16.1 C5.4 10 8.6 6 11.8 5 C15.6 6.4 18.4 11 19 17.5" fill="none" stroke="#3a3a3a" stroke-width="2.6" stroke-linejoin="round" /><path d="M4.3 16.1 C5.4 10 8.6 6 11.8 5 C15.6 6.4 18.4 11 19 17.5" fill="none" stroke="#fff" stroke-width="1.2" stroke-linejoin="round" /><circle cx="11.8" cy="5" r="3.3" fill="#d9c91c" stroke="#6a5c00" stroke-width="0.9"/><rect x="10.3" y="5.4" width="3" height="0.9" fill="#e0861a" opacity="0.85"/><circle cx="4.3" cy="16.1" r="3.3" fill="#d9c91c" stroke="#6a5c00" stroke-width="0.9"/><rect x="2.8" y="16.5" width="3" height="0.9" fill="#e0861a" opacity="0.85"/><circle cx="19" cy="17.5" r="3.3" fill="#d9c91c" stroke="#6a5c00" stroke-width="0.9"/><rect x="17.5" y="17.9" width="3" height="0.9" fill="#e0861a" opacity="0.85"/></svg>
<svg class="ic" style="left:783.0px;top:47.0px;width:24px;height:24px" viewBox="0 0 24 24"><path d="M4.4 19.2 V3.6 M19.3 19.2 V3.6 M4.4 19.2 L3.4 5 M19.3 19.2 L20.4 5" stroke="#555" stroke-width="0.8"/><path d="M4.4 19.2 C4.6 4.4 19.1 4.4 19.3 19.2" fill="none" stroke="#3a3a3a" stroke-width="2.6" stroke-linejoin="round" /><path d="M4.4 19.2 C4.6 4.4 19.1 4.4 19.3 19.2" fill="none" stroke="#fff" stroke-width="1.2" stroke-linejoin="round" /><rect x="2.3000000000000003" y="1.5" width="4.2" height="4.2" fill="#d9c91c" stroke="#6a5c00" stroke-width="0.8"/><rect x="17.2" y="1.5" width="4.2" height="4.2" fill="#d9c91c" stroke="#6a5c00" stroke-width="0.8"/><circle cx="4.4" cy="19.2" r="3.3" fill="#d9c91c" stroke="#6a5c00" stroke-width="0.9"/><rect x="2.9000000000000004" y="19.599999999999998" width="3" height="0.9" fill="#e0861a" opacity="0.85"/><circle cx="19.3" cy="19.2" r="3.3" fill="#d9c91c" stroke="#6a5c00" stroke-width="0.9"/><rect x="17.8" y="19.599999999999998" width="3" height="0.9" fill="#e0861a" opacity="0.85"/></svg>
<svg class="ic" style="left:815.0px;top:47.0px;width:24px;height:24px" viewBox="0 0 24 24"><path d="M4.2 19.2 V3.6 M19.4 19.2 V3.6 M4.2 19.2 L3.2 5 M19.4 19.2 L20.4 5" stroke="#555" stroke-width="0.8"/><path d="M4.2 19.2 C4.4 4.4 19.2 4.4 19.4 19.2" fill="none" stroke="#3a3a3a" stroke-width="2.6" stroke-linejoin="round" /><path d="M4.2 19.2 C4.4 4.4 19.2 4.4 19.4 19.2" fill="none" stroke="#fff" stroke-width="1.2" stroke-linejoin="round" /><rect x="2.1" y="1.5" width="4.2" height="4.2" fill="#d9c91c" stroke="#6a5c00" stroke-width="0.8"/><rect x="17.299999999999997" y="1.5" width="4.2" height="4.2" fill="#d9c91c" stroke="#6a5c00" stroke-width="0.8"/><path d="M9.8 14.6 C10.6 13.4 13.6 13.4 13.6 15.4 C13.6 17 12.2 17.4 11.4 17.4 C12.4 17.4 14 17.8 14 19.6 C14 21.8 10.6 22 9.6 20.6" fill="none" stroke="#4a4a4a" stroke-width="1.5"/><circle cx="4.2" cy="19.2" r="3.3" fill="#d9c91c" stroke="#6a5c00" stroke-width="0.9"/><rect x="2.7" y="19.599999999999998" width="3" height="0.9" fill="#e0861a" opacity="0.85"/><circle cx="19.4" cy="19.2" r="3.3" fill="#d9c91c" stroke="#6a5c00" stroke-width="0.9"/><rect x="17.9" y="19.599999999999998" width="3" height="0.9" fill="#e0861a" opacity="0.85"/></svg>
<svg class="abs" style="left:854px;top:53.8px;width:10px;height:10px" viewBox="-5 -5 10 10"><circle cx="0" cy="0" r="3.7" fill="#d9c91c" stroke="#6a5c00" stroke-width="0.9"/><rect x="-1.5" y="0.3" width="3" height="0.9" fill="#e0861a"/></svg>
<div class="grip" style="left:883.5px;top:51px"></div>
<div class="abs" style="left:891.5px;top:43.2px;width:32.10000000000002px;height:32.3px;border:1px solid #c4c4c4;border-radius:4px;background:linear-gradient(#f7f7f7 0,#f7f7f7 39%,#cacaca 39%,#cacaca 100%)"></div>
<div class="abs" style="left:925.5px;top:43.2px;width:31.899999999999977px;height:32.3px;border:1px solid #c4c4c4;border-radius:4px;background:linear-gradient(#f7f7f7 0,#f7f7f7 39%,#cacaca 39%,#cacaca 100%)"></div>
<div class="abs" style="left:959.4px;top:43.2px;width:32.0px;height:32.3px;border:1px solid #c4c4c4;border-radius:4px;background:linear-gradient(#f7f7f7 0,#f7f7f7 39%,#cacaca 39%,#cacaca 100%)"></div>
<svg class="ic" style="left:895.3px;top:47.4px;width:24px;height:24px" viewBox="0 0 24 24"><path d="M7 11 V7 a5 5 0 0 1 10 0 V11" fill="none" stroke="#0a6b70" stroke-width="3.4"/><path d="M7 11 V7 a5 5 0 0 1 10 0 V11" fill="none" stroke="#1fc4c8" stroke-width="1.6"/><rect x="4.2" y="10.4" width="15.8" height="12.2" rx="1.2" fill="#1fc4c8" stroke="#0a6b70" stroke-width="1"/><path d="M6 13.6 H18.2 M6 16.4 H18.2 M6 19.2 H18.2" stroke="#0a6b70" stroke-width="0.9" opacity="0.75"/></svg>
<svg class="ic" style="left:929.5px;top:47.0px;width:24px;height:24px" viewBox="0 0 24 24"><path d="M7 16.6 L19.4 5.6" stroke="#0a6b70" stroke-width="5.6"/><circle cx="6.2" cy="17" r="4.8" fill="#1fc4c8" stroke="#0a6b70" stroke-width="1"/><path d="M7.4 16.2 L19 5.9" stroke="#1fc4c8" stroke-width="3.6"/><path d="M4 18 a2.6 2.6 0 0 0 4.6 1" fill="none" stroke="#0a6b70" stroke-width="1" opacity="0.7"/></svg>
<svg class="ic" style="left:963.0px;top:47.0px;width:24px;height:24px" viewBox="0 0 24 24"><path d="M3.4 19.4 L21 4.2" stroke="#0a6b70" stroke-width="5.6"/><circle cx="12.2" cy="11.9" r="6.1" fill="#1fc4c8" stroke="#0a6b70" stroke-width="1"/><path d="M3.9 19 L20.5 4.6" stroke="#1fc4c8" stroke-width="3.6"/></svg>
<svg class="ic" style="left:996.5px;top:47.0px;width:24px;height:24px" viewBox="0 0 24 24"><circle cx="12.3" cy="11.9" r="10.2" fill="#1fc4c8" stroke="#0a6b70" stroke-width="1"/><circle cx="12.3" cy="11.9" r="7" fill="#fff" stroke="#0a6b70" stroke-width="0.9"/><circle cx="12.3" cy="11.9" r="4.3" fill="#1fc4c8" stroke="#0a6b70" stroke-width="0.9"/></svg>
<svg class="ic" style="left:1029.0px;top:47.0px;width:24px;height:24px" viewBox="0 0 24 24"><circle cx="12.9" cy="11.9" r="7.6" fill="none" stroke="#0a6b70" stroke-width="1.2"/><circle cx="12.9" cy="4.4" r="3.5" fill="#1fc4c8" stroke="#0a6b70" stroke-width="0.9"/><circle cx="5.3" cy="11.9" r="3.5" fill="#1fc4c8" stroke="#0a6b70" stroke-width="0.9"/><circle cx="20.6" cy="11.9" r="3.5" fill="#1fc4c8" stroke="#0a6b70" stroke-width="0.9"/><circle cx="12.9" cy="19.5" r="3.5" fill="#1fc4c8" stroke="#0a6b70" stroke-width="0.9"/></svg>
<div class="grip" style="left:6px;top:91px"></div>
<svg class="ic" style="left:16.0px;top:87.0px;width:24px;height:24px" viewBox="0 0 24 24"><path d="M1.8 7.4 L6.8 2.2 H20.8 V14.4 C20.8 18.4 16 21 11 21.4" fill="none" stroke="#1f447a" stroke-width="2.9" stroke-linejoin="round" /><path d="M1.8 7.4 L6.8 2.2 H20.8 V14.4 C20.8 18.4 16 21 11 21.4" fill="none" stroke="#5b8dc9" stroke-width="1.2999999999999998" stroke-linejoin="round" /><path d="M7.2 10.4 C9.6 7.4 15.2 8.8 14.4 12.4 C13.8 15 11.4 15.6 9.6 15.6" fill="none" stroke="#1f447a" stroke-width="2.7" stroke-linejoin="round" /><path d="M7.2 10.4 C9.6 7.4 15.2 8.8 14.4 12.4 C13.8 15 11.4 15.6 9.6 15.6" fill="none" stroke="#5b8dc9" stroke-width="1.1" stroke-linejoin="round" /></svg>
<svg class="ic" style="left:48.0px;top:87.0px;width:24px;height:24px" viewBox="0 0 24 24"><path d="M1.8 7.4 L6.8 2.2 H20.8 V14.4 C20.8 18.4 16 21 11 21.4" fill="none" stroke="#1f447a" stroke-width="2.9" stroke-linejoin="round" /><path d="M1.8 7.4 L6.8 2.2 H20.8 V14.4 C20.8 18.4 16 21 11 21.4" fill="none" stroke="#5b8dc9" stroke-width="1.2999999999999998" stroke-linejoin="round" /><path d="M7.2 10.4 C9.6 7.4 15.2 8.8 14.4 12.4 C13.8 15 11.4 15.6 9.6 15.6" fill="none" stroke="#1f447a" stroke-width="2.7" stroke-linejoin="round" /><path d="M7.2 10.4 C9.6 7.4 15.2 8.8 14.4 12.4 C13.8 15 11.4 15.6 9.6 15.6" fill="none" stroke="#5b8dc9" stroke-width="1.1" stroke-linejoin="round" /></svg>
<svg class="ic" style="left:80.0px;top:87.0px;width:24px;height:24px" viewBox="0 0 24 24"><path d="M11.7 1.2 V22.4" stroke="#1f447a" stroke-width="2.6"/><path d="M11.7 1.8 V21.8" stroke="#5b8dc9" stroke-width="1"/><polygon points="0.6,11.8 5.199999999999999,7.4 5.199999999999999,10.0 8.799999999999999,10.0 8.799999999999999,13.600000000000001 5.199999999999999,13.600000000000001 5.199999999999999,16.200000000000003" fill="#5b8dc9" stroke="#1f447a" stroke-width="0.9" stroke-linejoin="round"/><polygon points="23.2,11.8 18.6,7.4 18.6,10.0 15.0,10.0 15.0,13.600000000000001 18.6,13.600000000000001 18.6,16.200000000000003" fill="#5b8dc9" stroke="#1f447a" stroke-width="0.9" stroke-linejoin="round"/></svg>
<svg class="ic" style="left:112.0px;top:87.0px;width:24px;height:24px" viewBox="0 0 24 24"><rect x="0.8" y="10.5" width="22.4" height="2.6" fill="#b8b8b8" stroke="#7a7a7a" stroke-width="0.7"/><polygon points="4.199999999999999,11.8 7.1,10.5 8.2,7.4 9.299999999999999,10.5 12.2,11.8 9.299999999999999,13.100000000000001 8.2,16.200000000000003 7.1,13.100000000000001" fill="#5b8dc9" stroke="#1f447a" stroke-width="0.8" stroke-linejoin="round"/><polygon points="12,11.8 14.9,10.5 16,7.4 17.1,10.5 20,11.8 17.1,13.100000000000001 16,16.200000000000003 14.9,13.100000000000001" fill="#5b8dc9" stroke="#1f447a" stroke-width="0.8" stroke-linejoin="round"/></svg>
<svg class="ic" style="left:144.0px;top:87.0px;width:24px;height:24px" viewBox="0 0 24 24"><rect x="0.6" y="10.3" width="22.8" height="3" fill="#c0c0c0" stroke="#7a7a7a" stroke-width="0.7"/><path d="M9.6 0.8 V22.4 M14.4 0.8 V22.4" stroke="#1f447a" stroke-width="2.8" stroke-linecap="round"/><path d="M9.6 1.4 V21.8 M14.4 1.4 V21.8" stroke="#5b8dc9" stroke-width="1.1"/></svg>
<svg class="ic" style="left:176.0px;top:87.0px;width:24px;height:24px" viewBox="0 0 24 24"><rect x="1.8" y="1.6" width="20.6" height="20.2" fill="none" stroke="#1f447a" stroke-width="2.8" stroke-dasharray="3.2 1.6"/><rect x="1.8" y="1.6" width="20.6" height="20.2" fill="none" stroke="#5b8dc9" stroke-width="1.2" stroke-dasharray="3.2 1.6"/><rect x="2" y="13.4" width="9.4" height="8.4" fill="#fff" stroke="#1f447a" stroke-width="2.8"/><rect x="2" y="13.4" width="9.4" height="8.4" fill="none" stroke="#5b8dc9" stroke-width="1.2"/><path d="M12.4 11.6 L17 7" stroke="#1f447a" stroke-width="2.8"/><polygon points="19.6,4.2 13.8,5.4 18.4,10" fill="#5b8dc9" stroke="#1f447a" stroke-width="0.9" stroke-linejoin="round"/><path d="M12.8 11.2 L17 7" stroke="#5b8dc9" stroke-width="1.2"/></svg>
<svg class="ic" style="left:208.0px;top:87.0px;width:24px;height:24px" viewBox="0 0 24 24"><rect x="2" y="2" width="10.8" height="19.4" fill="#fff" stroke="#1f447a" stroke-width="2.8"/><rect x="2" y="2" width="10.8" height="19.4" fill="none" stroke="#5b8dc9" stroke-width="1.2"/><path d="M14 4.4 L22.6 21.4 H14" fill="none" stroke="#1f447a" stroke-width="2.6" stroke-dasharray="2.6 1.4"/><path d="M14 4.4 L22.6 21.4 H14" fill="none" stroke="#5b8dc9" stroke-width="1.1" stroke-dasharray="2.6 1.4"/></svg>
<svg class="ic" style="left:240.0px;top:87.0px;width:24px;height:24px" viewBox="0 0 24 24"><polygon points="1,6 8,1.6 15,5 8,9.8" fill="none" stroke="#3465a4" stroke-width="1.8" stroke-dasharray="2 1.2"/><ellipse cx="17" cy="5.4" rx="5.6" ry="3.4" fill="none" stroke="#3465a4" stroke-width="1.8" stroke-dasharray="2 1.2"/><polygon points="1,17.6 8,13.4 14.4,17.4 8,22.4" fill="none" stroke="#cc0000" stroke-width="2"/><ellipse cx="17.2" cy="17.8" rx="5.6" ry="3.6" fill="none" stroke="#cc0000" stroke-width="2"/><polygon points="7.4,6.6 11.6,11 9.4,11 9.4,16.6 5.4,16.6 5.4,11 3.2,11" fill="#5b8dc9" stroke="#1f447a" stroke-width="0.8" stroke-linejoin="round"/><polygon points="16.4,18 20.6,13.6 18.4,13.6 18.4,8 14.4,8 14.4,13.6 12.2,13.6" fill="#5b8dc9" stroke="#1f447a" stroke-width="0.8" stroke-linejoin="round"/></svg>
<div class="grip" style="left:277px;top:91px"></div>
<svg class="ic" style="left:287.0px;top:87.0px;width:24px;height:24px" viewBox="0 0 24 24"><polygon points="11.8,0.8 21.6,10.8 16.4,10.8 16.4,22.8 7.4,22.8 7.4,10.8 2.4,10.8" fill="#6c9cd6" stroke="#1b3a66" stroke-width="0.9" stroke-linejoin="round"/><polygon points="8,22.2 8,11.6 13.4,10 15.8,10.8 15.8,22.2" fill="#3a6aa8"/></svg>
<svg class="ic" style="left:319.0px;top:87.0px;width:24px;height:24px" viewBox="0 0 24 24"><polygon points="7.6,0.8 16.2,0.8 16.2,12.8 21.6,12.8 11.9,22.8 2.4,12.8 7.6,12.8" fill="#6c9cd6" stroke="#1b3a66" stroke-width="0.9" stroke-linejoin="round"/><polygon points="8.2,12 8.2,10.6 12.6,9.2 15.6,10 15.6,13.4 20,13.4 11.9,21.8 4,13.4 8.2,13.4" fill="#3a6aa8"/></svg>
<svg class="ic" style="left:351.0px;top:87.0px;width:24px;height:24px" viewBox="0 0 24 24"><path d="M9.6 1.6 h4.8 a1 1 0 0 1 1 1 v6.4 h6.2 a1 1 0 0 1 1 1 v4 a1 1 0 0 1 -1 1 h-6.2 v6.4 a1 1 0 0 1 -1 1 h-4.8 a1 1 0 0 1 -1 -1 v-6.4 h-6.2 a1 1 0 0 1 -1 -1 v-4 a1 1 0 0 1 1 -1 h6.2 v-6.4 a1 1 0 0 1 1 -1z" fill="#bcbcbc" stroke="#858585" stroke-width="1"/><path d="M10.4 3 h3.2 M3 10.4 h5.6 M15.4 10.4 h5.6" stroke="#e4e4e4" stroke-width="1"/></svg>
<svg class="ic" style="left:383.0px;top:87.0px;width:24px;height:24px" viewBox="0 0 24 24"><rect x="1" y="8.8" width="21.8" height="6.2" fill="#5b8dc9" stroke="#1b3a66" stroke-width="1"/><path d="M14 12.6 h7" stroke="#3465a4" stroke-width="1.6"/><path d="M7.8 16.9 h8" stroke="#b8b8b8" stroke-width="1"/><path d="M10 18.2 h3.6" stroke="#d8d8d8" stroke-width="0.8"/></svg>
<div class="grip" style="left:420px;top:91px"></div>
<svg class="ic" style="left:430.0px;top:87.0px;width:24px;height:24px" viewBox="0 0 24 24"><rect x="1.3" y="1.1" width="6.1" height="9.7" fill="#5b8dc9" stroke="#1f447a" stroke-width="0.9"/><rect x="2.7" y="6.0" width="3.3" height="3.7" fill="#3465a4" opacity="0.8"/><rect x="1.3" y="12.4" width="6.1" height="10.1" fill="#5b8dc9" stroke="#1f447a" stroke-width="0.9"/><rect x="2.7" y="17.4" width="3.3" height="3.8" fill="#3465a4" opacity="0.8"/><rect x="8.9" y="1.1" width="6.1" height="9.7" fill="#5b8dc9" stroke="#1f447a" stroke-width="0.9"/><rect x="10.3" y="6.0" width="3.3" height="3.7" fill="#3465a4" opacity="0.8"/><rect x="8.9" y="12.4" width="6.1" height="10.1" fill="#5b8dc9" stroke="#1f447a" stroke-width="0.9"/><rect x="10.3" y="17.4" width="3.3" height="3.8" fill="#3465a4" opacity="0.8"/><rect x="16.6" y="1.1" width="6.2" height="9.7" fill="#5b8dc9" stroke="#1f447a" stroke-width="0.9"/><rect x="18.0" y="6.0" width="3.4" height="3.7" fill="#3465a4" opacity="0.8"/><rect x="16.6" y="12.4" width="6.2" height="10.1" fill="#5b8dc9" stroke="#1f447a" stroke-width="0.9"/><rect x="18.0" y="17.4" width="3.4" height="3.8" fill="#3465a4" opacity="0.8"/></svg>
<svg class="ic" style="left:462.0px;top:87.0px;width:24px;height:24px" viewBox="0 0 24 24"><path d="M5.6 18 C8 18 10 16 10.4 14 M14 9.2 C14.4 6 16 4.4 18.2 4.4 M5.6 20.4 C9 20.4 11.4 17.4 12.4 14.2" fill="none" stroke="#8a8a8a" stroke-width="1.4"/><rect x="0.8" y="13.1" width="4.8" height="9.0" fill="#5b8dc9" stroke="#1f447a" stroke-width="0.9"/><rect x="2.2" y="17.6" width="2.0" height="3.3" fill="#3465a4" opacity="0.8"/><rect x="7.6" y="9.2" width="9.3" height="4.9" fill="#5b8dc9" stroke="#1f447a" stroke-width="0.9"/><rect x="9.0" y="11.6" width="6.5" height="1.3" fill="#3465a4" opacity="0.8"/><rect x="18.2" y="0.7" width="4.9" height="8.8" fill="#5b8dc9" stroke="#1f447a" stroke-width="0.9"/><rect x="19.6" y="5.1" width="2.1" height="3.2" fill="#3465a4" opacity="0.8"/></svg>
<svg class="ic" style="left:494.0px;top:87.0px;width:24px;height:24px" viewBox="0 0 24 24"><path d="M3.5 7.6 V20 H16.5 M3.5 20 L10 9.9 M3.5 20 L15 14" fill="none" stroke="#6a6a6a" stroke-width="0.9" stroke-dasharray="1.8 1.2"/><rect x="1.1" y="1.5" width="5.2" height="6.1" fill="#5b8dc9" stroke="#1f447a" stroke-width="0.9"/><rect x="2.5" y="4.5" width="2.4" height="1.8" fill="#3465a4" opacity="0.8"/><rect x="8.7" y="3.9" width="6.1" height="6.0" fill="#5b8dc9" stroke="#1f447a" stroke-width="0.9"/><rect x="10.1" y="6.9" width="3.3" height="1.8" fill="#3465a4" opacity="0.8"/><rect x="14.8" y="9.5" width="6.0" height="6.2" fill="#5b8dc9" stroke="#1f447a" stroke-width="0.9"/><rect x="16.2" y="12.6" width="3.2" height="1.9" fill="#3465a4" opacity="0.8"/><rect x="16.5" y="16.8" width="5.9" height="6.0" fill="#5b8dc9" stroke="#1f447a" stroke-width="0.9"/><rect x="17.9" y="19.8" width="3.1" height="1.8" fill="#3465a4" opacity="0.8"/></svg>
<svg class="ic" style="left:526.0px;top:87.0px;width:24px;height:24px" viewBox="0 0 24 24"><rect x="1.4" y="1.5" width="5.7" height="9.3" fill="#5b8dc9" stroke="#1f447a" stroke-width="0.9"/><rect x="2.8" y="6.2" width="2.9" height="3.5" fill="#3465a4" opacity="0.8"/><rect x="16.8" y="1.5" width="6.0" height="9.3" fill="#5b8dc9" stroke="#1f447a" stroke-width="0.9"/><rect x="18.2" y="6.2" width="3.2" height="3.5" fill="#3465a4" opacity="0.8"/><rect x="9.2" y="12.8" width="5.5" height="9.3" fill="#5b8dc9" stroke="#1f447a" stroke-width="0.9"/><rect x="10.6" y="17.5" width="2.7" height="3.5" fill="#3465a4" opacity="0.8"/></svg>
<svg class="ic" style="left:558.0px;top:87.0px;width:24px;height:24px" viewBox="0 0 24 24"><g stroke="#6e6e6e" stroke-width="0.8" stroke-linejoin="round"><path d="M17.4 5 h4 a1.4 1.4 0 0 1 1.4 1.4 v7.6 a1.4 1.4 0 0 1 -1.4 1.4 h-4" fill="none" stroke-width="2.6" stroke="#6a6a6a"/><path d="M17.4 5 h4 a1.4 1.4 0 0 1 1.4 1.4 v7.6 a1.4 1.4 0 0 1 -1.4 1.4 h-4" fill="none" stroke-width="1" stroke="#b4b4b4"/><polygon points="1,5.4 4.4,1.6 18,2.8 18,21.8 4.6,20.6 1,16.8" fill="#a4a4a4"/><polygon points="1,5.4 4.4,1.6 18,2.8 14.6,6.6" fill="#cacaca"/><polygon points="14.6,6.6 18,2.8 18,21.8 14.6,18" fill="#8a8a8a"/><polygon points="3,7.4 13,8.2 13,16.4 3,15.4" fill="#b6b6b6" stroke="#858585" stroke-width="0.6"/><polygon points="3,7.4 8,11.8 3,15.4" fill="#c4c4c4" stroke="none"/></g></svg>
<svg class="ic" style="left:590.0px;top:87.0px;width:24px;height:24px" viewBox="0 0 24 24"><polygon points="1.3,18.4 8.9,18.4 8.9,3.9" fill="#5b8dc9" stroke="#1f447a" stroke-width="0.9" stroke-linejoin="round"/><polygon points="15,3.9 15,18.4 23.1,18.4" fill="#5b8dc9" stroke="#1f447a" stroke-width="0.9" stroke-linejoin="round"/><polygon points="3.6,17.4 8,17.4 8,9" fill="#3465a4" opacity="0.7"/><polygon points="16,12 16,17.4 20.8,17.4" fill="#3465a4" opacity="0.7"/><path d="M12.1 0.7 V22.8" stroke="#1f447a" stroke-width="2.8"/><path d="M12.1 1.4 V22.8" stroke="#8fb6e6" stroke-width="1.4" stroke-dasharray="2.4 1.6"/></svg>
<svg class="ic" style="left:621.5px;top:87.0px;width:24px;height:24px" viewBox="0 0 24 24"><g stroke="#1f447a" stroke-width="0.9" stroke-linejoin="round"><polygon points="1.3,12.6 8.5,9.6 22.6,11.6 15.5,15" fill="#7eaadf"/><polygon points="1.3,12.6 15.5,15 15.5,22.5 1.3,20" fill="#5b8dc9"/><polygon points="15.5,15 22.6,11.6 22.6,18.4 15.5,22.5" fill="#1f3f70"/><polygon points="12,0.7 18.6,7.2 15,7.2 15,12.6 9,12.6 9,7.2 5.4,7.2" fill="#5b8dc9"/></g><rect x="3" y="17" width="10.6" height="2.4" fill="#3465a4" opacity="0.8"/></svg>
<svg class="ic" style="left:653.5px;top:87.0px;width:24px;height:24px" viewBox="0 0 24 24"><circle cx="8.4" cy="14.4" r="7.3" fill="#5b8dc9" stroke="#1f447a" stroke-width="0.9"/><path d="M2.6 16 a6 6 0 0 0 10 3.4 a7 7 0 0 1 -10 -3.4z" fill="#3465a4"/><circle cx="15.3" cy="9.5" r="7.5" fill="#fff" stroke="#444" stroke-width="0.9"/></svg>
<svg class="ic" style="left:686.0px;top:87.0px;width:24px;height:24px" viewBox="0 0 24 24"><circle cx="8.7" cy="14.4" r="7.5" fill="#5b8dc9" stroke="#1f447a" stroke-width="0.9"/><circle cx="15.2" cy="9.5" r="7.5" fill="#5b8dc9" stroke="#1f447a" stroke-width="0.9"/><circle cx="8.7" cy="14.4" r="6.9" fill="#5b8dc9"/><circle cx="15.2" cy="9.5" r="6.9" fill="#5b8dc9"/><path d="M2.8 16 a6.2 6.2 0 0 0 10.4 3.4 a7 7 0 0 1 -10.4 -3.4z M11.6 10.4 a4 4 0 0 1 1.4 4.6" fill="#3465a4" stroke="#3465a4" stroke-width="0.8"/></svg>
<svg class="ic" style="left:717.6px;top:87.0px;width:24px;height:24px" viewBox="0 0 24 24"><circle cx="8.6" cy="14.4" r="7.5" fill="#fff" stroke="#555" stroke-width="0.8"/><circle cx="15.4" cy="9.5" r="7.5" fill="#fff" stroke="#555" stroke-width="0.8"/><clipPath id="cpc"><circle cx="8.6" cy="14.4" r="7.5"/></clipPath><circle cx="15.4" cy="9.5" r="7.5" fill="#5b8dc9" stroke="#1f447a" stroke-width="0.9" clip-path="url(#cpc)"/><circle cx="8.6" cy="14.4" r="7.5" fill="none" stroke="#555" stroke-width="0.8"/><circle cx="15.4" cy="9.5" r="7.5" fill="none" stroke="#555" stroke-width="0.8"/></svg>
<div class="grip" style="left:755px;top:91px"></div>
<svg class="ic" style="left:764.5px;top:87.0px;width:24px;height:24px" viewBox="0 0 24 24"><g stroke-linejoin="round"><path d="M20.6 2.2 L22.6 1 L22.8 3.6 L13 14.4 L11.4 12.8 Z" fill="#8a8a8a" stroke="#444" stroke-width="0.8"/><path d="M11 12.4 L13.4 14.8 L6.6 22 a2.4 2.4 0 0 1 -3.6 0 L2.4 21.4 a2.4 2.4 0 0 1 0 -3.4 Z" fill="#3b7cc8" stroke="#1b3a66" stroke-width="0.9"/><path d="M2.6 4 L5.6 1 C8 1.4 9.4 3.6 8.6 6.4 L22 19 a2.2 2.2 0 0 1 -3.2 3.2 L6 9 C3.6 9.8 1.2 8.6 0.8 6 L3.4 7.2 L5.4 5.4 Z" fill="#8a8a8a" stroke="#4a4a4a" stroke-width="0.8"/></g></svg>
<svg class="ic" style="left:796.6px;top:87.0px;width:24px;height:24px" viewBox="0 0 24 24"><rect x="2.8" y="2.8" width="18.4" height="17.2" fill="#f4f4f4" stroke="#8a8a8a" stroke-width="0.9"/><path d="M2.8 6 H21.2 M2.8 10.6 H21.2 M2.8 15.2 H21.2 M7.4 2.8 V20 M12 2.8 V20 M16.6 2.8 V20" stroke="#c8c8c8" stroke-width="0.8"/><path d="M5.8 17 V9.4 M5.8 17 H14.6" stroke="#777" stroke-width="0.9"/><polygon points="5.8,8 4.4,10.4 7.2,10.4" fill="#fff" stroke="#777" stroke-width="0.6"/><polygon points="16,17 13.6,15.6 13.6,18.4" fill="#fff" stroke="#777" stroke-width="0.6"/></svg>
<svg class="ic" style="left:828.7px;top:87.0px;width:24px;height:24px" viewBox="0 0 24 24"><g stroke="#6e6e6e" stroke-width="0.9" stroke-linejoin="round"><polygon points="8,2 17.4,0.8 23.4,8.8 14.6,12" fill="#efefef"/><polygon points="14.6,12 23.4,8.8 23.4,16 14.6,22.2" fill="#c4c4c4"/><polygon points="0.9,10.6 8,2 14.6,12 14.6,22.2 0.9,19.4" fill="#fcfcfc"/><path d="M4.6 20 V13 h4 v8z" fill="#909090" stroke="#5a5a5a" stroke-width="0.7"/><path d="M6.6 13.6 v7" stroke="#c8b060" stroke-width="0.8"/><path d="M15.6 12.6 L22.4 10 M15.6 14.6 L22.4 12" stroke="#a0a0a0" stroke-width="0.6"/></g></svg>
<svg class="ic" style="left:860.8px;top:87.0px;width:24px;height:24px" viewBox="0 0 24 24"><path d="M4 0.9 h11.8 l4.2 4.2 v17.9 h-16z" fill="#fff" stroke="#6e6e6e" stroke-width="1" stroke-linejoin="round"/><path d="M15.8 0.9 v4.2 h4.2z" fill="#e0e0e0" stroke="#6e6e6e" stroke-width="0.8" stroke-linejoin="round"/><path d="M6 4.2 H13.4 V7 M6 4.2 V20.4 H18 V8.4 H10 V14 M10 17 V20.4 M14 8.4 V12 H18 M14 15 V20.4 M14 16.6 H18 M6 11 H8" fill="none" stroke="#5a5a5a" stroke-width="1.1"/><path d="M11.6 9.8 h1.4 v1.4 h-1.4z M15.4 9.8 h1.4 v1.4 h-1.4z M15.4 13.4 h1.4 v1.4 h-1.4z" fill="#9a9a9a"/></svg>
<svg class="ic" style="left:892.9px;top:87.0px;width:24px;height:24px" viewBox="0 0 24 24"><path d="M4 0.9 h11.8 l4.2 4.2 v17.9 h-16z" fill="#fff" stroke="#858585" stroke-width="0.9" stroke-linejoin="round"/><path d="M15.8 0.9 v4.2 h4.2z" fill="#e0e0e0" stroke="#858585" stroke-width="0.8" stroke-linejoin="round"/><rect x="5.4" y="17.6" width="13.2" height="4" fill="#d2d2d2"/><circle cx="8.2" cy="14.2" r="3.3" fill="#3465a4"/><path d="M12.4 11.6 l4 -1.2 l2.6 2 v3.6 l-4 1.6 l-3 -2z" fill="#2a9d9b"/><path d="M8.6 7.2 l3.2 -1.4 l3 1 v4 l-3 1.6 l-3.2 -1.2z" fill="#d6183e"/><path d="M8.6 7.2 l3.2 1 l3 -1.4 M11.8 8.2 v4.2" fill="none" stroke="#fff" stroke-width="0.5" opacity="0.6"/></svg>
<svg class="ic" style="left:925.0px;top:87.0px;width:24px;height:24px" viewBox="0 0 24 24"><path d="M4 0.9 h11.8 l4.2 4.2 v17.9 h-16z" fill="#fff" stroke="#858585" stroke-width="0.9" stroke-linejoin="round"/><path d="M15.8 0.9 v4.2 h4.2z" fill="#e0e0e0" stroke="#858585" stroke-width="0.8" stroke-linejoin="round"/><rect x="5.4" y="17.6" width="13.2" height="4" fill="#d2d2d2"/><rect x="6.4" y="8.8" width="2.6" height="10.4" fill="#3465a4"/><rect x="10.6" y="5.2" width="2.8" height="13.6" fill="#d6183e"/><rect x="15.4" y="12.4" width="2.6" height="6.4" fill="#2a9d9b"/></svg>
<svg class="ic" style="left:957.1px;top:87.0px;width:24px;height:24px" viewBox="0 0 24 24"><path d="M4 0.9 h11.8 l4.2 4.2 v17.9 h-16z" fill="#fff" stroke="#858585" stroke-width="0.9" stroke-linejoin="round"/><path d="M15.8 0.9 v4.2 h4.2z" fill="#e0e0e0" stroke="#858585" stroke-width="0.8" stroke-linejoin="round"/><rect x="5.4" y="17.6" width="13.2" height="4" fill="#d2d2d2"/><path d="M9 9 L5.8 12.2 L9 15.4" fill="none" stroke="#3465a4" stroke-width="2"/><path d="M13.2 8 L10.8 16.6" stroke="#d6183e" stroke-width="2.2"/><path d="M15 9 L18.2 12.2 L15 15.4" fill="none" stroke="#2a9d9b" stroke-width="2"/></svg>
<svg class="ic" style="left:989.2px;top:87.0px;width:24px;height:24px" viewBox="0 0 24 24"><path d="M4 0.9 h11.8 l4.2 4.2 v17.9 h-16z" fill="#fff" stroke="#858585" stroke-width="0.9" stroke-linejoin="round"/><path d="M15.8 0.9 v4.2 h4.2z" fill="#e0e0e0" stroke="#858585" stroke-width="0.8" stroke-linejoin="round"/><rect x="5.4" y="17.6" width="13.2" height="4" fill="#d2d2d2"/><polygon points="10,5 17.4,6.4 17.4,17.4 10,15.4" fill="#d6183e"/><polygon points="10,5 17.4,6.4 17.4,17.4 10,15.4" fill="none" stroke="#a00c2c" stroke-width="0.6"/><polygon points="6,10.2 13.8,9 13.8,19.2 6,20.4" fill="#3465a4"/></svg>
<svg class="ic" style="left:1021.3px;top:87.0px;width:24px;height:24px" viewBox="0 0 24 24"><path d="M4 0.9 h11.8 l4.2 4.2 v17.9 h-16z" fill="#fff" stroke="#858585" stroke-width="0.9" stroke-linejoin="round"/><path d="M15.8 0.9 v4.2 h4.2z" fill="#e0e0e0" stroke="#858585" stroke-width="0.8" stroke-linejoin="round"/><rect x="5.4" y="17.6" width="13.2" height="4" fill="#d2d2d2"/><g fill="#fff" stroke="#4a4a4a" stroke-width="0.9" stroke-linejoin="round"><polygon points="5.2,15.6 12,12.6 18.8,15.6 12,18.8"/><polygon points="5.2,12 12,9 18.8,12 12,15.2"/><polygon points="5.2,8.4 12,5.4 18.8,8.4 12,11.6"/></g><path d="M10 8.4 h4" stroke="#bbb" stroke-width="0.8"/></svg>
<div class="abs" style="left:46.5px;top:122px;width:43px;height:24.5px;background:#d0d0d0;border:1px solid #a8a8a8;border-radius:3px 3px 0 0"></div>
<div class="abs" style="left:1.5px;top:119.5px;width:45px;height:28px;background:#fff;border:1px solid #a8a8a8;border-bottom:none;border-radius:3px 3px 0 0"></div>
<div class="t" style="left:6.2px;top:125.5px;font-size:13px;color:#000;">Model</div>
<div class="t" style="left:52.7px;top:126px;font-size:13px;color:#8a8a8a;letter-spacing:-0.532px;">Tasks</div>
<div class="t" style="left:133px;top:147.5px;font-size:13px;color:#000;">Model</div>
<svg class="abs" style="left:294px;top:148px;width:58px;height:14px" viewBox="294 148 58 14" fill="none" stroke="#555" stroke-width="1.5"><rect x="296.5" y="151" width="10" height="9.5"/><line x1="296.5" y1="153.8" x2="306.5" y2="153.8"/><rect x="317.5" y="153.5" width="7" height="7"/><polyline points="320.5,153.5 320.5,151 327.5,151 327.5,158 324.5,158"/><path d="M339.3 151.3 L348 159.8 M348 151.3 L339.3 159.8" stroke-width="1.7"/></svg>
<div class="abs" style="left:338px;top:164px;width:14px;height:236px;border:1px solid #999;border-top-color:#d0d0d0;background:#fff"></div>
<div class="hl" style="left:338px;top:177px;width:14px;background:#999"></div>
<div class="hl" style="left:338px;top:193px;width:14px;background:#999"></div>
<div class="hl" style="left:338px;top:385px;width:14px;background:#999"></div>
<div class="abs" style="left:343.5px;top:170px;width:3px;height:2px;background:#aaa"></div>
<div class="abs" style="left:343.5px;top:391.5px;width:3px;height:2px;background:#aaa"></div>
<div class="abs" style="left:-2.3px;top:379.3px;width:148.1px;height:20.6px;border:3.8px solid #ff0000;background:#3399ff"></div>
<div class="tri-d" style="left:26.2px;top:170.5px"></div>
<svg class="ic" style="left:44.0px;top:165.0px;width:16px;height:16px" viewBox="0 0 16 16"><ellipse cx="8" cy="8" rx="5.4" ry="3.4" fill="#fff" stroke="#000" stroke-width="1.3"/><circle cx="8.3" cy="8.4" r="1.9" fill="#000"/><rect x="6.7" y="6.3" width="1.5" height="1.4" fill="#fff"/></svg>
<svg class="ic" style="left:66.0px;top:165.0px;width:16px;height:16px" viewBox="0 0 16 16"><g stroke="#8e8e8e" stroke-width="0.8" stroke-linejoin="round"><polygon points="6,1.2 13,0.8 7.5,11.5 0.8,11" fill="#f6f6f6"/><polygon points="0.8,11 7.5,11.5 7.3,15.2 0.8,13.6" fill="#e6e6e6"/><polygon points="13,0.8 15.4,3.4 15.3,7.6 7.3,15.2 7.5,11.5" fill="#c8c8c8"/><polygon points="7,4 11,3.9 10.2,5.5 6.2,5.6" fill="#d0d0d0" stroke="#aaa" stroke-width="0.5"/></g></svg>
<div class="t" style="left:88px;top:165.5px;font-size:13px;color:#000;letter-spacing:0.066px;">Site</div>
<div class="tri-d" style="left:46.2px;top:188.5px"></div>
<svg class="ic" style="left:64.0px;top:183.0px;width:16px;height:16px" viewBox="0 0 16 16"><ellipse cx="8" cy="8" rx="5.4" ry="3.4" fill="#fff" stroke="#000" stroke-width="1.3"/><circle cx="8.3" cy="8.4" r="1.9" fill="#000"/><rect x="6.7" y="6.3" width="1.5" height="1.4" fill="#fff"/></svg>
<svg class="ic" style="left:86.0px;top:183.0px;width:16px;height:16px" viewBox="0 0 16 16"><g stroke="#858585" stroke-width="0.8" stroke-linejoin="round"><polygon points="5.5,1.2 11.5,0.8 15.4,6 10,7.6" fill="#e4e4e4"/><polygon points="10,7.6 15.4,6 15.4,10.6 10,15.2" fill="#c2c2c2"/><polygon points="0.8,7.5 5.5,1.2 10,7.6 10,15.2 0.8,13" fill="#f4f4f4"/><path d="M3.3 13.5 V9.3 a1.7 1.7 0 0 1 3.4 0 V14.4z" fill="#a0a0a0" stroke="#707070"/><polygon points="11.8,8.6 13.8,8 13.8,10 11.8,10.8" fill="#909090" stroke="none"/></g></svg>
<div class="t" style="left:108px;top:183.5px;font-size:13px;color:#000;letter-spacing:0.292px;">Building</div>
<div class="tri-d" style="left:66.2px;top:206.5px"></div>
<svg class="ic" style="left:84.0px;top:201.0px;width:16px;height:16px" viewBox="0 0 16 16"><ellipse cx="8" cy="8" rx="5.4" ry="3.4" fill="#fff" stroke="#000" stroke-width="1.3"/><circle cx="8.3" cy="8.4" r="1.9" fill="#000"/><rect x="6.7" y="6.3" width="1.5" height="1.4" fill="#fff"/></svg>
<svg class="ic" style="left:106.0px;top:201.0px;width:16px;height:16px" viewBox="0 0 16 16"><g stroke-linejoin="round"><polygon points="0.7,2.8 15,2.8 15.5,3.4 15.5,13.7 1.2,13.7 0.7,13.1" fill="#c4c4c4" stroke="#9a9a9a" stroke-width="0.5"/><rect x="0.7" y="2.8" width="14.2" height="10.3" fill="#fafafa" stroke="#858585" stroke-width="0.8"/><path d="M3 5.2 h4.2 M3 5.2 v3.2 h2 M3 10.5 h6.5 v-2 M9 4.6 h4 v6 h-1.6 M11 7 h2" fill="none" stroke="#5e5e5e" stroke-width="1.1"/></g></svg>
<div class="t" style="left:128px;top:201.5px;font-size:13px;color:#000;letter-spacing:0.105px;">Level</div>
<div class="tri-r" style="left:88.7px;top:223px"></div>
<svg class="ic" style="left:104.0px;top:219.0px;width:16px;height:16px" viewBox="0 0 16 16"><ellipse cx="8" cy="8" rx="5.4" ry="3.4" fill="#fff" stroke="#000" stroke-width="1.3"/><circle cx="8.3" cy="8.4" r="1.9" fill="#000"/><rect x="6.7" y="6.3" width="1.5" height="1.4" fill="#fff"/></svg>
<svg class="ic" style="left:126.0px;top:219.0px;width:16px;height:16px" viewBox="0 0 16 16"><g stroke="#8a8a8a" stroke-width="0.7" stroke-linejoin="round"><polygon points="10,5.8 13,6.2 13,13.8 10,13.2" fill="#e2e2e2"/><polygon points="13,6.2 15,5.4 15,12.6 13,13.8" fill="#a8a8a8"/><polygon points="3,6 6.5,7 6.5,15.4 3,14.2" fill="#e2e2e2"/><polygon points="6.5,7 8.6,6.4 8.6,14.4 6.5,15.4" fill="#a8a8a8"/><polygon points="0.6,3 9.5,0.8 15.5,2 6.5,4.6" fill="#f2f2f2"/><polygon points="0.6,3 6.5,4.6 6.5,7.2 0.6,5.4" fill="#e2e2e2"/><polygon points="6.5,4.6 15.5,2 15.5,4.6 6.5,7.2" fill="#bdbdbd"/></g></svg>
<div class="t" style="left:148px;top:219.5px;font-size:13px;color:#000;letter-spacing:-0.206px;">Slab</div>
<div class="tri-d" style="left:86.2px;top:242.5px"></div>
<svg class="ic" style="left:104.0px;top:237.0px;width:16px;height:16px" viewBox="0 0 16 16"><ellipse cx="8" cy="8" rx="5.4" ry="3.4" fill="#fff" stroke="#000" stroke-width="1.3"/><circle cx="8.3" cy="8.4" r="1.9" fill="#000"/><rect x="6.7" y="6.3" width="1.5" height="1.4" fill="#fff"/></svg>
<svg class="ic" style="left:126.0px;top:237.0px;width:16px;height:16px" viewBox="0 0 16 16"><g stroke="#858585" stroke-width="0.7" stroke-linejoin="round"><polygon points="0.8,2.6 5.2,0.8 15.2,4.6 10.6,6.6" fill="#f0f0f0"/><polygon points="10.6,6.6 15.2,4.6 15.2,13 10.6,15.2" fill="#b4b4b4"/><polygon points="0.8,2.6 10.6,6.6 10.6,15.2 0.8,11" fill="#e0e0e0"/><path d="M0.8 5.4 L10.6 9.5 M0.8 8.2 L10.6 12.4 M4.2 4 v2.8 M7.6 5.4 v2.8 M2.6 6.2 v2.8 M6 7.6 v2.8 M9 8.8 v2.8 M4.2 9.6 v2.8 M7.6 11 v2.8 M10.6 9.5 L15.2 7.4 M10.6 12.4 L15.2 10.2" fill="none" stroke-width="0.6"/></g></svg>
<div class="t" style="left:148px;top:237.5px;font-size:13px;color:#000;letter-spacing:-0.198px;">Wall</div>
<svg class="ic" style="left:124.0px;top:255.0px;width:16px;height:16px" viewBox="0 0 16 16"><ellipse cx="8" cy="8.5" rx="5.2" ry="3.2" fill="none" stroke="#555" stroke-width="0.9"/><path d="M3.5 3.5 L12.5 13.5" stroke="#555" stroke-width="1" /><path d="M6.5 8.5 a1.5 1.5 0 0 0 3 0" stroke="#777" stroke-width="0.8" fill="none"/></svg>
<svg class="ic" style="left:146.0px;top:255.0px;width:16px;height:16px" viewBox="0 0 16 16"><polyline points="0.8,10 4.4,10 7.4,6 10.6,13.2 15,1.6" fill="none" stroke="#7a7a7a" stroke-width="1.6" stroke-linejoin="round"/></svg>
<div class="t" style="left:168px;top:255.5px;font-size:13px;color:#7a7a7a;letter-spacing:-0.126px;">Line</div>
<div class="tri-r" style="left:108.7px;top:277px"></div>
<svg class="ic" style="left:124.0px;top:273.0px;width:16px;height:16px" viewBox="0 0 16 16"><ellipse cx="8" cy="8" rx="5.4" ry="3.4" fill="#fff" stroke="#000" stroke-width="1.3"/><circle cx="8.3" cy="8.4" r="1.9" fill="#000"/><rect x="6.7" y="6.3" width="1.5" height="1.4" fill="#fff"/></svg>
<svg class="ic" style="left:146.0px;top:273.0px;width:16px;height:16px" viewBox="0 0 16 16"><g stroke-linejoin="round"><polygon points="0.8,1.4 14.6,3 15.4,3.8 15.4,15.4 14.6,15.2 0.8,13.2" fill="#9c9c9c" stroke="#777" stroke-width="0.7"/><polygon points="0.8,1.4 14.6,3 14.6,15.2 0.8,13.2" fill="#dedede" stroke="#777" stroke-width="0.7"/><g fill="#8e8e8e"><polygon points="2.2,3 5.4,3.4 5.4,6.4 2.2,6"/><polygon points="6.6,3.5 9.6,3.9 9.6,6.9 6.6,6.5"/><polygon points="10.8,4 13.4,4.3 13.4,7.3 10.8,7"/><polygon points="2.2,7.2 5.4,7.6 5.4,12.3 2.2,11.8"/><polygon points="6.6,7.7 9.6,8.1 9.6,12.9 6.6,12.5"/><polygon points="10.8,8.2 13.4,8.5 13.4,13.5 10.8,13.1"/></g></g></svg>
<div class="t" style="left:168px;top:273.5px;font-size:13px;color:#000;letter-spacing:0.033px;">Window</div>
<div class="tri-r" style="left:88.7px;top:295px"></div>
<svg class="ic" style="left:104.0px;top:291.0px;width:16px;height:16px" viewBox="0 0 16 16"><ellipse cx="8" cy="8" rx="5.4" ry="3.4" fill="#fff" stroke="#000" stroke-width="1.3"/><circle cx="8.3" cy="8.4" r="1.9" fill="#000"/><rect x="6.7" y="6.3" width="1.5" height="1.4" fill="#fff"/></svg>
<svg class="ic" style="left:126.0px;top:291.0px;width:16px;height:16px" viewBox="0 0 16 16"><g stroke="#858585" stroke-width="0.7" stroke-linejoin="round"><polygon points="0.8,2.6 5.2,0.8 15.2,4.6 10.6,6.6" fill="#f0f0f0"/><polygon points="10.6,6.6 15.2,4.6 15.2,13 10.6,15.2" fill="#b4b4b4"/><polygon points="0.8,2.6 10.6,6.6 10.6,15.2 0.8,11" fill="#e0e0e0"/><path d="M0.8 5.4 L10.6 9.5 M0.8 8.2 L10.6 12.4 M4.2 4 v2.8 M7.6 5.4 v2.8 M2.6 6.2 v2.8 M6 7.6 v2.8 M9 8.8 v2.8 M4.2 9.6 v2.8 M7.6 11 v2.8 M10.6 9.5 L15.2 7.4 M10.6 12.4 L15.2 10.2" fill="none" stroke-width="0.6"/></g></svg>
<div class="t" style="left:148px;top:291.5px;font-size:13px;color:#000;letter-spacing:0.053px;">Wall001</div>
<div class="tri-r" style="left:88.7px;top:313px"></div>
<svg class="ic" style="left:104.0px;top:309.0px;width:16px;height:16px" viewBox="0 0 16 16"><ellipse cx="8" cy="8" rx="5.4" ry="3.4" fill="#fff" stroke="#000" stroke-width="1.3"/><circle cx="8.3" cy="8.4" r="1.9" fill="#000"/><rect x="6.7" y="6.3" width="1.5" height="1.4" fill="#fff"/></svg>
<svg class="ic" style="left:126.0px;top:309.0px;width:16px;height:16px" viewBox="0 0 16 16"><g stroke="#858585" stroke-width="0.7" stroke-linejoin="round"><polygon points="0.8,2.6 5.2,0.8 15.2,4.6 10.6,6.6" fill="#f0f0f0"/><polygon points="10.6,6.6 15.2,4.6 15.2,13 10.6,15.2" fill="#b4b4b4"/><polygon points="0.8,2.6 10.6,6.6 10.6,15.2 0.8,11" fill="#e0e0e0"/><path d="M0.8 5.4 L10.6 9.5 M0.8 8.2 L10.6 12.4 M4.2 4 v2.8 M7.6 5.4 v2.8 M2.6 6.2 v2.8 M6 7.6 v2.8 M9 8.8 v2.8 M4.2 9.6 v2.8 M7.6 11 v2.8 M10.6 9.5 L15.2 7.4 M10.6 12.4 L15.2 10.2" fill="none" stroke-width="0.6"/></g></svg>
<div class="t" style="left:148px;top:309.5px;font-size:13px;color:#000;letter-spacing:0.053px;">Wall002</div>
<div class="tri-r" style="left:88.7px;top:331px"></div>
<svg class="ic" style="left:104.0px;top:327.0px;width:16px;height:16px" viewBox="0 0 16 16"><ellipse cx="8" cy="8" rx="5.4" ry="3.4" fill="#fff" stroke="#000" stroke-width="1.3"/><circle cx="8.3" cy="8.4" r="1.9" fill="#000"/><rect x="6.7" y="6.3" width="1.5" height="1.4" fill="#fff"/></svg>
<svg class="ic" style="left:126.0px;top:327.0px;width:16px;height:16px" viewBox="0 0 16 16"><g stroke="#858585" stroke-width="0.7" stroke-linejoin="round"><polygon points="0.8,2.6 5.2,0.8 15.2,4.6 10.6,6.6" fill="#f0f0f0"/><polygon points="10.6,6.6 15.2,4.6 15.2,13 10.6,15.2" fill="#b4b4b4"/><polygon points="0.8,2.6 10.6,6.6 10.6,15.2 0.8,11" fill="#e0e0e0"/><path d="M0.8 5.4 L10.6 9.5 M0.8 8.2 L10.6 12.4 M4.2 4 v2.8 M7.6 5.4 v2.8 M2.6 6.2 v2.8 M6 7.6 v2.8 M9 8.8 v2.8 M4.2 9.6 v2.8 M7.6 11 v2.8 M10.6 9.5 L15.2 7.4 M10.6 12.4 L15.2 10.2" fill="none" stroke-width="0.6"/></g></svg>
<div class="t" style="left:148px;top:327.5px;font-size:13px;color:#000;letter-spacing:0.053px;">Wall003</div>
<div class="tri-r" style="left:88.7px;top:349px"></div>
<svg class="ic" style="left:104.0px;top:345.0px;width:16px;height:16px" viewBox="0 0 16 16"><ellipse cx="8" cy="8" rx="5.4" ry="3.4" fill="#fff" stroke="#000" stroke-width="1.3"/><circle cx="8.3" cy="8.4" r="1.9" fill="#000"/><rect x="6.7" y="6.3" width="1.5" height="1.4" fill="#fff"/></svg>
<svg class="ic" style="left:126.0px;top:345.0px;width:16px;height:16px" viewBox="0 0 16 16"><g stroke="#8a8a8a" stroke-width="0.7" stroke-linejoin="round"><polygon points="10,5.8 13,6.2 13,13.8 10,13.2" fill="#e2e2e2"/><polygon points="13,6.2 15,5.4 15,12.6 13,13.8" fill="#a8a8a8"/><polygon points="3,6 6.5,7 6.5,15.4 3,14.2" fill="#e2e2e2"/><polygon points="6.5,7 8.6,6.4 8.6,14.4 6.5,15.4" fill="#a8a8a8"/><polygon points="0.6,3 9.5,0.8 15.5,2 6.5,4.6" fill="#f2f2f2"/><polygon points="0.6,3 6.5,4.6 6.5,7.2 0.6,5.4" fill="#e2e2e2"/><polygon points="6.5,4.6 15.5,2 15.5,4.6 6.5,7.2" fill="#bdbdbd"/></g></svg>
<div class="t" style="left:148px;top:345.5px;font-size:13px;color:#000;letter-spacing:-0.035px;">Slab001</div>
<div class="tri-r" style="left:88.7px;top:367px"></div>
<svg class="ic" style="left:104.0px;top:363.0px;width:16px;height:16px" viewBox="0 0 16 16"><ellipse cx="8" cy="8" rx="5.4" ry="3.4" fill="#fff" stroke="#000" stroke-width="1.3"/><circle cx="8.3" cy="8.4" r="1.9" fill="#000"/><rect x="6.7" y="6.3" width="1.5" height="1.4" fill="#fff"/></svg>
<svg class="ic" style="left:126.0px;top:363.0px;width:16px;height:16px" viewBox="0 0 16 16"><circle cx="8" cy="8" r="6.6" fill="none" stroke="#7c7c7c" stroke-width="1.8" stroke-dasharray="1.6 1.5"/><circle cx="8" cy="8" r="4" fill="#d8d8d8" stroke="#8a8a8a" stroke-width="0.8"/><path d="M5.2 9 a3 3 0 0 0 5.6 0.6" fill="none" stroke="#9a9a9a" stroke-width="1.2"/></svg>
<div class="t" style="left:148px;top:363.5px;font-size:13px;color:#000;letter-spacing:-0.265px;">Space</div>
<div class="tri-r" style="left:28.7px;top:385px"></div>
<svg class="ic" style="left:44.0px;top:381.0px;width:16px;height:16px" viewBox="0 0 16 16"><ellipse cx="8" cy="8" rx="5.4" ry="3.4" fill="#fff" stroke="#000" stroke-width="1.3"/><circle cx="8.3" cy="8.4" r="1.9" fill="#000"/><rect x="6.7" y="6.3" width="1.5" height="1.4" fill="#fff"/></svg>
<svg class="ic" style="left:66.0px;top:381.0px;width:16px;height:16px" viewBox="0 0 16 16"><g stroke="#8a8a8a" stroke-width="0.7" stroke-linejoin="round"><polygon points="10,5.8 13,6.2 13,13.8 10,13.2" fill="#b8dcdc"/><polygon points="13,6.2 15,5.4 15,12.6 13,13.8" fill="#7fb0b0"/><polygon points="3,6 6.5,7 6.5,15.4 3,14.2" fill="#b8dcdc"/><polygon points="6.5,7 8.6,6.4 8.6,14.4 6.5,15.4" fill="#7fb0b0"/><polygon points="0.6,3 9.5,0.8 15.5,2 6.5,4.6" fill="#d8ecec"/><polygon points="0.6,3 6.5,4.6 6.5,7.2 0.6,5.4" fill="#b8dcdc"/><polygon points="6.5,4.6 15.5,2 15.5,4.6 6.5,7.2" fill="#8fc0c0"/></g></svg>
<div class="t" style="left:88px;top:381.5px;font-size:13px;color:#000;letter-spacing:-0.005px;">shade</div>
<div class="hl" style="left:2px;top:409px;width:350px;background:#c4c4c4"></div>
<div class="abs" style="left:337px;top:410px;width:14.5px;height:244px;border:1px solid #999;border-top:none;background:#fff"></div>
<div class="hl" style="left:337px;top:423.5px;width:14.5px;background:#999"></div>
<div class="hl" style="left:337px;top:481px;width:14.5px;background:#999"></div>
<div class="hl" style="left:337px;top:641px;width:14.5px;background:#999"></div>
<div class="abs" style="left:343px;top:416px;width:3px;height:2px;background:#aaa"></div>
<div class="abs" style="left:343px;top:647px;width:3px;height:2px;background:#aaa"></div>
<div class="t" style="left:5.6px;top:412.5px;font-size:13px;color:#000;font-weight:bold;letter-spacing:-0.026px;">Base</div>
<div class="hl" style="left:2px;top:429px;width:335px"></div>
<div class="hl" style="left:2px;top:449px;width:335px"></div>
<div class="vl" style="left:101px;top:430px;height:20px"></div>
<div class="tri-r" style="left:9.5px;top:436.0px"></div>
<div class="t" style="left:25.4px;top:432.5px;font-size:13px;color:#000;letter-spacing:0.123px;">Placement</div>
<div class="t" style="left:105.5px;top:432.5px;font-size:13px;color:#000;letter-spacing:0.360px;">[(0.00 0.00 1.00); 0.00 °; (0.00 mm ...</div>
<div class="hl" style="left:2px;top:469px;width:335px"></div>
<div class="vl" style="left:101px;top:450px;height:20px"></div>
<div class="t" style="left:5.6px;top:472.5px;font-size:13px;color:#000;font-weight:bold;letter-spacing:0.486px;">Component</div>
<div class="hl" style="left:2px;top:489px;width:335px"></div>
<div class="hl" style="left:22px;top:509px;width:315px"></div>
<div class="vl" style="left:101px;top:490px;height:20px"></div>
<div class="t" style="left:25.4px;top:492.5px;font-size:13px;color:#000;letter-spacing:0.140px;">Additions</div>
<div class="hl" style="left:22px;top:529px;width:315px"></div>
<div class="vl" style="left:101px;top:510px;height:20px"></div>
<div class="t" style="left:25.4px;top:512.5px;font-size:13px;color:#000;letter-spacing:-0.186px;">Axis</div>
<div class="hl" style="left:22px;top:549px;width:315px"></div>
<div class="vl" style="left:101px;top:530px;height:20px"></div>
<div class="t" style="left:25.4px;top:532.5px;font-size:13px;color:#000;letter-spacing:-0.377px;">Base</div>
<div class="t" style="left:105.2px;top:532.5px;font-size:13px;color:#000;letter-spacing:0.223px;">Extrude001</div>
<div class="hl" style="left:22px;top:569px;width:315px"></div>
<div class="vl" style="left:101px;top:550px;height:20px"></div>
<div class="t" style="left:25.4px;top:552.5px;font-size:13px;color:#000;letter-spacing:-0.129px;">Clone Of</div>
<div class="hl" style="left:22px;top:589px;width:315px"></div>
<div class="vl" style="left:101px;top:570px;height:20px"></div>
<div class="t" style="left:25.4px;top:572.5px;font-size:13px;color:#000;letter-spacing:-0.501px;">Hi Res</div>
<div class="hl" style="left:22px;top:609px;width:315px"></div>
<div class="vl" style="left:101px;top:590px;height:20px"></div>
<div class="t" style="left:25.4px;top:592.5px;font-size:13px;color:#000;letter-spacing:0.228px;">Horizontal...</div>
<div class="t" style="left:105.2px;top:592.5px;font-size:13px;color:#000;letter-spacing:0.761px;">3.73 m^2</div>
<div class="hl" style="left:22px;top:629px;width:315px"></div>
<div class="vl" style="left:101px;top:610px;height:20px"></div>
<div class="t" style="left:25.4px;top:612.5px;font-size:13px;color:#000;letter-spacing:0.238px;">Material</div>
<div class="hl" style="left:22px;top:649px;width:315px"></div>
<div class="vl" style="left:101px;top:630px;height:20px"></div>
<div class="t" style="left:25.4px;top:632.5px;font-size:13px;color:#000;letter-spacing:-0.054px;">Move Base</div>
<div class="t" style="left:105.2px;top:632.5px;font-size:13px;color:#000;letter-spacing:0.035px;">false</div>
<div class="vl" style="left:101px;top:650px;height:4px"></div>
<div class="abs" style="left:-1.6px;top:448.6px;width:339.8px;height:24.8px;border:3.4px solid #ff0000;background:#fff"></div>
<div class="abs" style="left:1.8px;top:452px;width:99.2px;height:18px;background:#3399ff"></div>
<div class="abs" style="left:102px;top:452px;width:232.8px;height:18px;border:1px solid #9a6cf0;border-bottom-width:2px;border-top:none;border-right:none;background:#fff"></div>
<div class="t" style="left:25.4px;top:452.5px;font-size:13px;color:#000;letter-spacing:-0.302px;">Label</div>
<div class="t" style="left:108.2px;top:452.5px;font-size:13px;color:#000;letter-spacing:-0.055px;">shade</div>
<svg class="abs" style="left:321px;top:451.5px;width:12px;height:12px" viewBox="0 0 12 12"><circle cx="6" cy="6" r="5.2" fill="#c9d7ea" stroke="#5b95d6" stroke-width="1.1"/><path d="M3.2 8 C3.6 5 4.6 4 5.2 4 M6.3 4.2 C5.6 6 5.8 7.6 6.4 8.2 M7.4 4.5 L9 8 M9 4.5 L7.4 8" stroke="#3f7fca" stroke-width="0.9" fill="none"/></svg>
<div class="abs" style="left:2px;top:655.5px;width:37.5px;height:23.5px;background:#d0d0d0;border:1px solid #a8a8a8;border-top:none;border-radius:0 0 3px 3px"></div>
<div class="abs" style="left:40px;top:654px;width:39px;height:28.5px;background:#fff;border:1px solid #a8a8a8;border-top:none;border-radius:0 0 3px 3px"></div>
<div class="t" style="left:6.8px;top:659px;font-size:13px;color:#8a8a8a;letter-spacing:-0.181px;">View</div>
<div class="t" style="left:45.6px;top:661.5px;font-size:13px;color:#000;letter-spacing:-0.020px;">Data</div>
<div class="t" style="left:2.8px;top:698.5px;font-size:13px;color:#000;letter-spacing:0.294px;">Valid, Internal name: Structure002</div>
<svg class="abs" style="left:358px;top:119px;width:694px;height:531px" viewBox="358 119 694 531" shape-rendering="crispEdges">
<rect x="358" y="119" width="694" height="531" fill="#fff"/>
<polygon points="595.0,519.6 764.4,588.4 764.4,600.9 595.0,531.8" fill="#5c5c5c"/>
<polygon points="764.4,588.4 1042.6,546.9 1042.6,559.8 764.4,600.9" fill="#9a9a9a"/>
<g stroke-width="1" fill="none"><line x1="358" y1="780.0" x2="1052" y2="675.6" stroke="#cbcbcb"/><line x1="358" y1="761.2" x2="1052" y2="656.8" stroke="#cbcbcb"/><line x1="358" y1="742.4" x2="1052" y2="638.0" stroke="#cbcbcb"/><line x1="358" y1="723.6" x2="1052" y2="619.2" stroke="#cbcbcb"/><line x1="358" y1="704.8" x2="1052" y2="600.4" stroke="#cbcbcb"/><line x1="358" y1="686.0" x2="1052" y2="581.6" stroke="#cbcbcb"/><line x1="358" y1="667.2" x2="1052" y2="562.8" stroke="#cbcbcb"/><line x1="358" y1="629.6" x2="1052" y2="525.2" stroke="#cbcbcb"/><line x1="358" y1="610.8" x2="1052" y2="506.4" stroke="#cbcbcb"/><line x1="358" y1="592.0" x2="1052" y2="487.6" stroke="#cbcbcb"/><line x1="358" y1="573.2" x2="1052" y2="468.8" stroke="#cbcbcb"/><line x1="358" y1="554.4" x2="1052" y2="450.0" stroke="#cbcbcb"/><line x1="358" y1="535.6" x2="1052" y2="431.2" stroke="#cbcbcb"/><line x1="358" y1="516.8" x2="1052" y2="412.4" stroke="#cbcbcb"/><line x1="358" y1="498.0" x2="1052" y2="393.6" stroke="#cbcbcb"/><line x1="358" y1="479.2" x2="1052" y2="374.8" stroke="#cbcbcb"/><line x1="358" y1="460.4" x2="1052" y2="356.0" stroke="#b6b6b6"/><line x1="358" y1="441.6" x2="1052" y2="337.2" stroke="#cbcbcb"/><line x1="358" y1="422.8" x2="1052" y2="318.4" stroke="#cbcbcb"/><line x1="358" y1="404.0" x2="1052" y2="299.6" stroke="#cbcbcb"/><line x1="358" y1="385.2" x2="1052" y2="280.8" stroke="#cbcbcb"/><line x1="358" y1="366.4" x2="1052" y2="262.0" stroke="#cbcbcb"/><line x1="358" y1="347.6" x2="1052" y2="243.2" stroke="#cbcbcb"/><line x1="358" y1="328.8" x2="1052" y2="224.4" stroke="#cbcbcb"/><line x1="358" y1="310.0" x2="1052" y2="205.6" stroke="#cbcbcb"/><line x1="358" y1="291.2" x2="1052" y2="186.8" stroke="#cbcbcb"/><line x1="358" y1="272.4" x2="1052" y2="168.0" stroke="#b6b6b6"/><line x1="358" y1="253.6" x2="1052" y2="149.2" stroke="#cbcbcb"/><line x1="358" y1="234.8" x2="1052" y2="130.4" stroke="#cbcbcb"/><line x1="358" y1="216.0" x2="1052" y2="111.6" stroke="#cbcbcb"/><line x1="358" y1="197.2" x2="1052" y2="92.8" stroke="#cbcbcb"/><line x1="358" y1="178.4" x2="1052" y2="74.0" stroke="#cbcbcb"/><line x1="358" y1="159.6" x2="1052" y2="55.2" stroke="#cbcbcb"/><line x1="358" y1="140.8" x2="1052" y2="36.4" stroke="#cbcbcb"/><line x1="358" y1="122.0" x2="1052" y2="17.6" stroke="#cbcbcb"/><line x1="358" y1="103.2" x2="1052" y2="-1.2" stroke="#cbcbcb"/><line x1="358" y1="84.4" x2="1052" y2="-20.0" stroke="#b6b6b6"/><line x1="358" y1="-201.8" x2="1052" y2="81.4" stroke="#b6b6b6"/><line x1="358" y1="-170.6" x2="1052" y2="112.6" stroke="#c4c4c4" stroke-dasharray="2.5 1.1"/><line x1="358" y1="-139.4" x2="1052" y2="143.8" stroke="#c4c4c4" stroke-dasharray="2.5 1.1"/><line x1="358" y1="-108.2" x2="1052" y2="175.0" stroke="#c4c4c4" stroke-dasharray="2.5 1.1"/><line x1="358" y1="-77.0" x2="1052" y2="206.2" stroke="#c4c4c4" stroke-dasharray="2.5 1.1"/><line x1="358" y1="-45.8" x2="1052" y2="237.4" stroke="#c4c4c4" stroke-dasharray="2.5 1.1"/><line x1="358" y1="-14.6" x2="1052" y2="268.6" stroke="#c4c4c4" stroke-dasharray="2.5 1.1"/><line x1="358" y1="16.6" x2="1052" y2="299.8" stroke="#c4c4c4" stroke-dasharray="2.5 1.1"/><line x1="358" y1="47.8" x2="1052" y2="331.0" stroke="#c4c4c4" stroke-dasharray="2.5 1.1"/><line x1="358" y1="79.0" x2="1052" y2="362.2" stroke="#c4c4c4" stroke-dasharray="2.5 1.1"/><line x1="358" y1="110.2" x2="1052" y2="393.4" stroke="#b6b6b6"/><line x1="358" y1="141.4" x2="1052" y2="424.6" stroke="#c4c4c4" stroke-dasharray="2.5 1.1"/><line x1="358" y1="172.6" x2="1052" y2="455.8" stroke="#c4c4c4" stroke-dasharray="2.5 1.1"/><line x1="358" y1="203.8" x2="1052" y2="487.0" stroke="#c4c4c4" stroke-dasharray="2.5 1.1"/><line x1="358" y1="235.0" x2="1052" y2="518.2" stroke="#c4c4c4" stroke-dasharray="2.5 1.1"/><line x1="358" y1="266.2" x2="1052" y2="549.4" stroke="#c4c4c4" stroke-dasharray="2.5 1.1"/><line x1="358" y1="297.4" x2="1052" y2="580.6" stroke="#c4c4c4" stroke-dasharray="2.5 1.1"/><line x1="358" y1="328.6" x2="1052" y2="611.8" stroke="#c4c4c4" stroke-dasharray="2.5 1.1"/><line x1="358" y1="359.8" x2="1052" y2="643.0" stroke="#c4c4c4" stroke-dasharray="2.5 1.1"/><line x1="358" y1="391.0" x2="1052" y2="674.2" stroke="#c4c4c4" stroke-dasharray="2.5 1.1"/><line x1="358" y1="453.4" x2="1052" y2="736.6" stroke="#c4c4c4" stroke-dasharray="2.5 1.1"/><line x1="358" y1="484.6" x2="1052" y2="767.8" stroke="#c4c4c4" stroke-dasharray="2.5 1.1"/><line x1="358" y1="515.8" x2="1052" y2="799.0" stroke="#c4c4c4" stroke-dasharray="2.5 1.1"/><line x1="358" y1="547.0" x2="1052" y2="830.2" stroke="#c4c4c4" stroke-dasharray="2.5 1.1"/><line x1="358" y1="578.2" x2="1052" y2="861.4" stroke="#c4c4c4" stroke-dasharray="2.5 1.1"/><line x1="358" y1="609.4" x2="1052" y2="892.6" stroke="#c4c4c4" stroke-dasharray="2.5 1.1"/><line x1="358" y1="640.6" x2="1052" y2="923.8" stroke="#c4c4c4" stroke-dasharray="2.5 1.1"/><line x1="358" y1="671.8" x2="1052" y2="955.0" stroke="#c4c4c4" stroke-dasharray="2.5 1.1"/></g>
<polyline points="595.0,519.6 595.0,531.8 764.4,600.9 1042.6,559.8 1042.6,546.9" fill="none" stroke="#000" stroke-width="2" stroke-linejoin="round"/>
<line x1="764.4" y1="588.4" x2="764.4" y2="600.9" stroke="#000" stroke-width="2"/>
<line x1="358" y1="422.2" x2="595.0" y2="518.9" stroke="#08de08" stroke-width="1"/>
<line x1="358" y1="648.4" x2="764.4" y2="587.3" stroke="#ee3a3a" stroke-width="1"/>
<line x1="764.4" y1="588.0" x2="915" y2="649.5" stroke="#08de08" stroke-width="1"/>
<polygon points="595.0,203.6 764.4,273.0 764.4,588.4 595.0,519.6" fill="#666666"/>
<polygon points="764.4,273.0 1042.6,231.6 1042.6,546.9 764.4,588.4" fill="#cccccc"/>
<polygon points="595.0,190.4 764.4,260.2 764.4,273.0 595.0,203.6" fill="#5a5a5a"/>
<polygon points="764.4,260.2 1042.6,218.5 1042.6,231.6 764.4,273.0" fill="#999999"/>
<polygon points="595.0,190.4 874.5,148.7 1042.6,218.5 764.4,260.2" fill="#333333"/>
<line x1="602.3" y1="206.6" x2="602.3" y2="522.6" stroke="#000" stroke-width="1.6"/>
<line x1="757.7" y1="270.3" x2="757.7" y2="585.7" stroke="#000" stroke-width="1.6"/>
<g stroke="#000" stroke-linecap="round"><line x1="595.0" y1="190.4" x2="874.5" y2="148.7" stroke-width="2"/><line x1="874.5" y1="148.7" x2="1042.6" y2="218.5" stroke-width="2"/><line x1="595.0" y1="190.4" x2="764.4" y2="260.2" stroke-width="2"/><line x1="764.4" y1="260.2" x2="1042.6" y2="218.5" stroke-width="2"/><line x1="595.0" y1="203.6" x2="764.4" y2="273.0" stroke-width="2"/><line x1="764.4" y1="273.0" x2="1042.6" y2="231.6" stroke-width="2"/><line x1="595.0" y1="190.4" x2="595.0" y2="519.6" stroke-width="2"/><line x1="764.4" y1="260.2" x2="764.4" y2="588.4" stroke-width="2"/><line x1="1042.6" y1="218.5" x2="1042.6" y2="546.9" stroke-width="2"/><line x1="595.0" y1="519.6" x2="764.4" y2="588.4" stroke-width="2"/><line x1="764.4" y1="588.4" x2="1042.6" y2="546.9" stroke-width="2"/></g>
<polygon points="860.9,367.6 946.1,355.1 946.1,451.0 860.9,463.5" fill="#000"/>
<polygon points="862.9,369.3 944.9,357.3 944.9,449.2 862.9,461.2" fill="#a2a2a2"/>
<polygon points="864.4,370.6 943.3,359.0 943.3,447.9 864.4,459.5" fill="#000"/>
<polygon points="865.5,371.5 939.9,360.6 939.9,445.6 865.5,456.5" fill="#2f6060"/>
<polygon points="865.5,371.5 869.3,371.0 869.3,456.0 865.5,456.5" fill="#99cccc"/>
<polygon points="870.9,370.7 938.3,360.8 938.3,444.9 870.9,454.8" fill="#669999"/>
<polygon points="848.8,370.8 914.7,398.0 914.7,404.6 848.8,377.4" fill="#7fb0ea"/>
<polygon points="914.7,398.0 1024.1,380.6 1024.1,387.2 914.7,404.6" fill="#bfe4ff"/>
<polygon points="848.8,370.8 957.6,352.6 1024.1,380.6 914.7,398.0" fill="#6699cc"/>
<polygon points="848.8,370.8 957.6,352.6 1024.1,380.6 1024.1,387.2 914.7,404.6 848.8,377.4" fill="none" stroke="#6e9bd0" stroke-width="1.6" stroke-linejoin="round"/>
<line x1="860.9" y1="367.6" x2="946.1" y2="355.1" stroke="#000" stroke-width="1.6"/>
<line x1="764.4" y1="587.9" x2="1052" y2="544.6" stroke="#e04040" stroke-width="1"/>
<line x1="646" y1="539.7" x2="764.4" y2="588.0" stroke="#20d020" stroke-width="1"/>
</svg>
<div class="abs" style="left:358px;top:650px;width:96px;height:29.8px;background:#cdcdcd;border:1px solid #9c9c9c;border-radius:0 0 3px 3px"></div>
<div class="abs" style="left:454.5px;top:650px;width:141px;height:32.5px;background:#fff;border:1px solid #a8a8a8;border-top:none;border-radius:0 0 3px 3px"></div>
<svg class="ic" style="left:362.90000000000003px;top:655.6999999999999px;width:16.4px;height:16.4px" viewBox="0 0 16 16"><polygon points="1,3 3,0.8 13.6,0.8 11.8,3" fill="#f05a5a"/><polygon points="1,3 3,3 3,15 1,15.4" fill="#d02020"/><polygon points="1,15.4 3,15 3,13" fill="#f08080"/><polygon points="2.6,2.6 12.6,2.6 12.6,6 6.8,6 6.8,8 10.6,8 10.6,11 6.8,11 6.8,15.2 2.6,15.2" fill="#fff" stroke="#d82a2a" stroke-width="0.9" stroke-linejoin="round"/><path d="M7.4 11.6 l1.2 -1.2 l-0.6 -1.6 l1.8 -0.4 l0.6 -1.6 l1.6 0.8 l1.6 -0.8 l0.4 1.8 l1.4 0.8 l-1 1.4 l0.4 1.8 l-1.8 0.2 l-1 1.6 l-1.6 -0.8 l-1.6 1 l-0.4 -1.8z" fill="#3399ff"/></svg>
<div class="t" style="left:389.1px;top:657.8px;font-size:13px;color:#8a8a8a;letter-spacing:0.462px;">Start</div>
<svg class="abs" style="left:431px;top:660px;width:16px;height:14px" viewBox="0 0 16 14"><path d="M2 1.4 L13.6 12.8 M13.6 1.4 L2 12.8" stroke="#9a9a9a" stroke-width="2.7" fill="none"/></svg>
<svg class="ic" style="left:458.9px;top:658.1px;width:16px;height:16px" viewBox="0 0 16 16"><path d="M2.6 0.8 h7.6 l3.6 3.6 v11 h-11.2z" fill="#fff" stroke="#6a6a6a" stroke-width="0.9" stroke-linejoin="round"/><path d="M10.2 0.8 v3.6 h3.6" fill="none" stroke="#6a6a6a" stroke-width="0.8"/><path d="M4 8.6 l3 -1.6 l3 1.4 v3.6 l-3 1.8 l-3 -1.6z" fill="#2f5f9a" stroke="#16325c" stroke-width="0.7"/><path d="M4 8.6 l3 1.4 l3 -1.6 M7 10 v3.8" stroke="#16325c" stroke-width="0.5" fill="none"/><ellipse cx="9.6" cy="5.8" rx="2.7" ry="1.8" transform="rotate(-32 9.6 5.8)" fill="#e02020" stroke="#8a0c0c" stroke-width="0.5"/></svg>
<div class="t" style="left:485.5px;top:658.5px;font-size:13px;color:#000;letter-spacing:0.284px;">shoebox : 1*</div>
<svg class="abs" style="left:573px;top:660px;width:16px;height:14px" viewBox="0 0 16 14"><path d="M2.4 1.4 L14 12.8 M14 1.4 L2.4 12.8" stroke="#8c8c8c" stroke-width="2.7" fill="none"/></svg>
<div class="abs" style="left:766.9px;top:690.3px;width:32.8px;height:34px;border:1px solid #c4c4c4;border-radius:4px;background:linear-gradient(#fafafa 0,#fafafa 37.5%,#d0d0d0 37.5%,#d0d0d0 100%)"></div>
<svg class="ic" style="left:772.3px;top:695.1px;width:21px;height:21px" viewBox="0 0 21 21"><rect x="0.8" y="0.8" width="19.4" height="19.4" rx="2.6" fill="#d8d8d8" stroke="#6e6e6e" stroke-width="0.9"/><rect x="2.6" y="2.6" width="15.8" height="15.8" rx="1.2" fill="#2c5e2c" stroke="#183818" stroke-width="0.9"/><path d="M4.6 7.6 L8.6 10 L4.6 12.6" fill="none" stroke="#d8f08a" stroke-width="1.7"/><path d="M8.6 14.6 H13.2" stroke="#e8e0a0" stroke-width="1.4"/><path d="M13.4 4.4 H17 L15.6 6.8z" fill="#7a3c14"/></svg>
<svg class="ic" style="left:805.9px;top:695.6px;width:20px;height:20px" viewBox="0 0 20 20"><rect x="0.9" y="0.9" width="18.2" height="16.6" rx="1" fill="#f8f8f8" stroke="#9a9a9a" stroke-width="0.9"/><path d="M1 5 H19 M1 9.4 H19 M1 13.6 H19 M15 1 V17.4 M5.4 1 V3 M10 1 V3" stroke="#cfcfcf" stroke-width="0.8"/><path d="M3.8 14.6 V8.2 M3.8 14.6 H11.6" stroke="#8a8a8a" stroke-width="0.9"/><circle cx="3.8" cy="7.4" r="1.1" fill="#fff" stroke="#8a8a8a" stroke-width="0.7"/><polygon points="13.4,14.6 10.8,13.2 10.8,16" fill="#fff" stroke="#8a8a8a" stroke-width="0.7"/></svg>
<svg class="ic" style="left:836.7px;top:694.4000000000001px;width:22.6px;height:22.6px" viewBox="0 0 22.6 22.6"><rect x="1" y="1" width="20.6" height="20.6" rx="1.4" fill="#fafafa" stroke="#6e6e6e" stroke-width="1"/><polygon points="1.4,1.4 19.2,1.4 1.4,19.4" fill="#7a7a7a"/><polygon points="5.6,1.6 16.6,1.6 10.6,7.8" fill="#b4b4b4"/><polygon points="1.6,5 1.6,17 8.4,10.4" fill="#9a9a9a"/><path d="M1.6 21 L21 1.6" stroke="#4a4a4a" stroke-width="3.2"/><path d="M1.6 21 L21 1.6" stroke="#fff" stroke-width="1.4"/></svg>
<svg class="ic" style="left:868.9px;top:694.5px;width:22.4px;height:22.4px" viewBox="0 0 22.4 22.4"><g fill="#c6c6c6" stroke="#c6c6c6" stroke-width="1.6" stroke-linejoin="round"><polygon points="11.2,0.9 16.4,5.6 6,5.6"/><polygon points="11.2,21.7 16.4,17 6,17"/><polygon points="0.9,11.3 5.6,6 5.6,16.6"/><polygon points="21.5,11.3 16.8,6 16.8,16.6"/><polygon points="6.4,3.6 16,3.6 19,6.6 19,16 16,19 6.4,19 3.4,16 3.4,6.6"/></g><g fill="#f2f2f2"><polygon points="6.6,6.4 9.8,6.9 7.1,9.6"/><polygon points="15.8,6.4 12.6,6.9 15.3,9.6"/><polygon points="6.6,16.2 9.8,15.7 7.1,13"/><polygon points="15.8,16.2 12.6,15.7 15.3,13"/></g></svg>
<div class="btn" style="left:897.3px;top:693.3px;width:89.3px;height:25.6px;border-radius:4px;border-color:#9c9c9c"></div>
<svg class="ic" style="left:919.4px;top:699.3px;width:13px;height:13px" viewBox="0 0 13 13"><g fill="#3b6fb0" stroke="#1f3f70" stroke-width="0.7" stroke-linejoin="round"><polygon points="6.5,0.5 9,3.6 7.6,3.6 7.6,5.4 9.4,5.4 9.4,4 12.5,6.5 9.4,9 9.4,7.6 7.6,7.6 7.6,9.4 9,9.4 6.5,12.5 4,9.4 5.4,9.4 5.4,7.6 3.6,7.6 3.6,9 0.5,6.5 3.6,4 3.6,5.4 5.4,5.4 5.4,3.6 4,3.6"/></g></svg>
<div class="t" style="left:936.4px;top:698.5px;font-size:13px;color:#000;letter-spacing:0.019px;">Auto</div>
<div class="dd" style="left:976.2px;top:706.0px;border-left-width:4px;border-right-width:4px;border-top-width:4px;border-top-color:#666"></div>
<div class="btn" style="left:1009px;top:693.3px;width:60px;height:25.6px;border-radius:4px;border-color:#9c9c9c"></div>
<svg class="abs" style="left:1011.1px;top:699.4px;width:13.6px;height:13.4px" viewBox="0 0 14 14"><rect x="0" y="0" width="14" height="14" fill="#3a6ea8"/><path d="M0 3 L3.6 6.6 L7 4 L10.4 6.6 L14 3 L14 0 L0 0Z" fill="#5b95d8"/></svg>
</body></html>
